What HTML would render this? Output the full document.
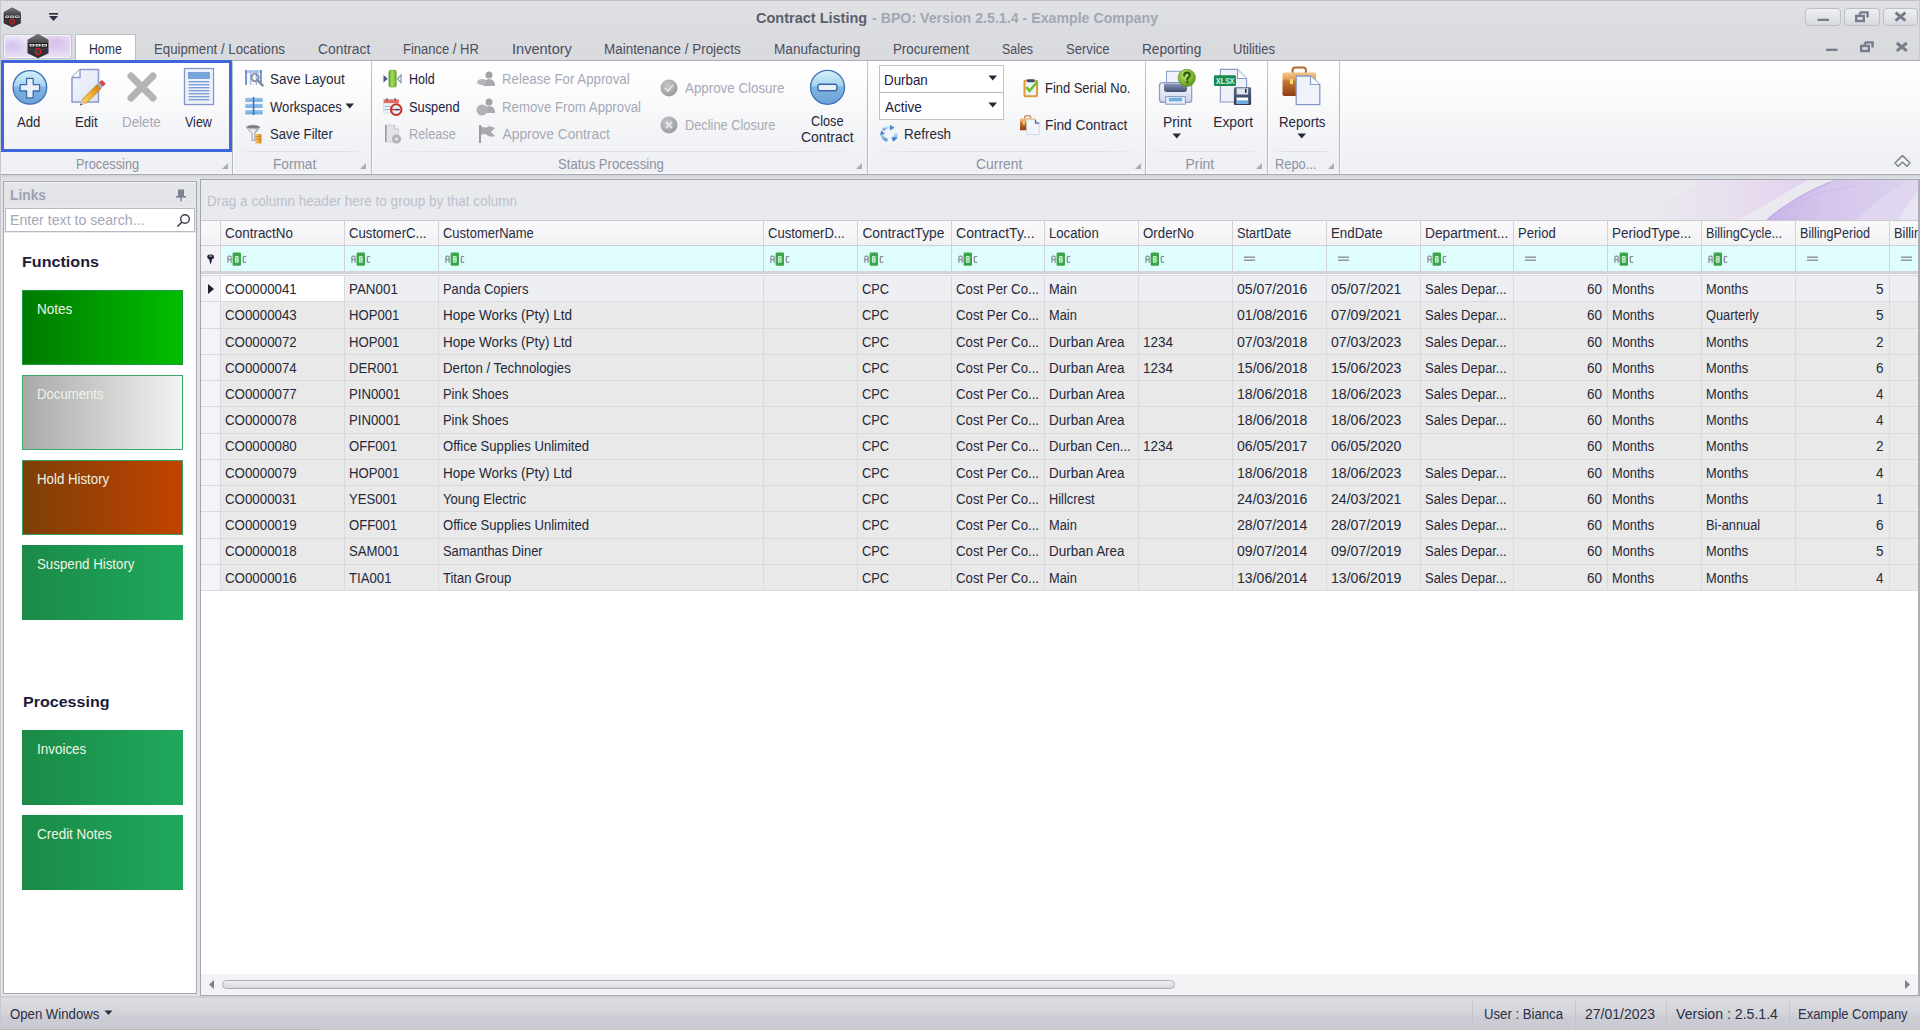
<!DOCTYPE html><html><head><meta charset="utf-8"><style>
html,body{margin:0;padding:0;}
body{width:1920px;height:1030px;overflow:hidden;position:relative;background:#e3e4e8;font-family:"Liberation Sans",sans-serif;}
body>div,body>svg{position:absolute;}
.t{position:absolute;white-space:nowrap;transform-origin:0 0;}
</style></head><body>
<div style="left:0px;top:0px;width:1920px;height:61px;background:linear-gradient(#e1e2e6 0,#dbdce0 45%,#d9dade 100%);"></div>
<div style="left:0px;top:0px;width:1920px;height:1px;background:#bfc1c7;"></div>
<svg style="position:absolute;left:2px;top:7px;" width="20" height="21" viewBox="0 0 20 21"><g transform="translate(0.8,0.2) scale(0.82)"><defs><linearGradient id="lg0_8" x1="0" y1="0" x2="0" y2="1"><stop offset="0" stop-color="#77777c"/><stop offset="0.5" stop-color="#3c3c40"/><stop offset="1" stop-color="#2a2a2e"/></linearGradient></defs><polygon points="11.5,0 22,6 22,19.5 11.5,24.5 1,19.5 1,6" fill="url(#lg0_8)"/><rect x="2" y="9.3" width="19.5" height="4.3" fill="#111"/><path d="M3,10.2 h5 v2.6 h-5 z M9,10.2 h5 v2.6 h-5 z M15,10.2 h5.5 v2.6 h-5.5 z" fill="#f2f2f2"/><path d="M4.2,11 h2.6 v1 h-2.6 z M10.2,11 h2.6 v1 h-2.6 z M16.2,11 h3.4 v1 h-3.4 z" fill="#333"/><polygon points="11.5,14.5 14,16 14,19.5 11.5,21 9,19.5 9,16" fill="none" stroke="#d42020" stroke-width="1.3"/><circle cx="11.5" cy="17.8" r="1" fill="#2a5a5a"/></g></svg>
<svg style="position:absolute;left:48px;top:12px;" width="12" height="10" viewBox="0 0 12 10"><rect x="1" y="1" width="9" height="1.6" fill="#2a2a40"/><polygon points="1,4 10,4 5.5,9" fill="#2a2a40"/></svg>
<div class="t" style="left:756.00px;top:9.78px;font-size:14.50px;line-height:16.20px;color:#5b5e6c;font-weight:bold;">Contract Listing</div>
<div class="t" style="left:872.00px;top:9.78px;font-size:14.50px;line-height:16.20px;color:#a3a7b3;font-weight:bold;transform:scaleX(0.9779);"> - BPO: Version 2.5.1.4 - Example Company</div>
<div style="left:1805.3px;top:7.5px;width:35.3px;height:18.2px;box-sizing:border-box;border:1.3px solid #bcbfc8;border-radius:4px;background:linear-gradient(#eff0f3,#e2e3e7 60%,#d9dadf);"></div>
<div style="left:1844px;top:7.5px;width:35.7px;height:18.2px;box-sizing:border-box;border:1.3px solid #bcbfc8;border-radius:4px;background:linear-gradient(#eff0f3,#e2e3e7 60%,#d9dadf);"></div>
<div style="left:1883px;top:7.5px;width:34.8px;height:18.2px;box-sizing:border-box;border:1.3px solid #bcbfc8;border-radius:4px;background:linear-gradient(#eff0f3,#e2e3e7 60%,#d9dadf);"></div>
<svg style="position:absolute;left:1800px;top:0px;" width="120" height="60" viewBox="0 0 120 60"><rect x="17.5" y="18.7" width="11.5" height="2.3" fill="#777b8b"/><path d="M59.9,12.4 H67.6 V17.6 M59.9,12.4 V14.7" stroke="#777b8b" stroke-width="2.4" fill="none"/><rect x="56.2" y="15.9" width="7.6" height="5.1" fill="none" stroke="#777b8b" stroke-width="2.4"/><path d="M95.6,12.6 L105.4,20.7 M105.4,12.6 L95.6,20.7" stroke="#777b8b" stroke-width="2.9"/><rect x="26" y="48.7" width="11.5" height="2.3" fill="#777b8b"/><path d="M64.9,42.4 H72.6 V47.6 M64.9,42.4 V44.7" stroke="#777b8b" stroke-width="2.4" fill="none"/><rect x="61.2" y="45.9" width="7.6" height="5.1" fill="none" stroke="#777b8b" stroke-width="2.4"/><path d="M96.8,43 L106.8,50.8 M106.8,43 L96.8,50.8" stroke="#777b8b" stroke-width="2.9"/></svg>
<div style="left:1918.5px;top:0px;width:1.5px;height:61px;background:#c9cbd1;"></div>
<div style="left:0px;top:60px;width:1920px;height:1px;background:#abaeb7;"></div>
<div style="left:3px;top:34px;width:69px;height:25px;box-sizing:border-box;border:1px solid #c3c5cd;border-radius:3px;box-shadow:inset 0 0 0 1px #f6f2fa;background:radial-gradient(ellipse 40% 80% at 78% 30%,rgba(214,176,232,0.75),rgba(214,176,232,0) 70%),radial-gradient(ellipse 30% 60% at 12% 45%,rgba(200,180,236,0.6),rgba(200,180,236,0) 70%),linear-gradient(#efe9f7,#e0d6f2 60%,#e8e0f6);"></div>
<svg style="position:absolute;left:26px;top:33px;" width="24" height="27" viewBox="0 0 24 27"><g transform="translate(0.5,0.8) scale(1.0)"><defs><linearGradient id="lg0_5" x1="0" y1="0" x2="0" y2="1"><stop offset="0" stop-color="#77777c"/><stop offset="0.5" stop-color="#3c3c40"/><stop offset="1" stop-color="#2a2a2e"/></linearGradient></defs><polygon points="11.5,0 22,6 22,19.5 11.5,24.5 1,19.5 1,6" fill="url(#lg0_5)"/><rect x="2" y="9.3" width="19.5" height="4.3" fill="#111"/><path d="M3,10.2 h5 v2.6 h-5 z M9,10.2 h5 v2.6 h-5 z M15,10.2 h5.5 v2.6 h-5.5 z" fill="#f2f2f2"/><path d="M4.2,11 h2.6 v1 h-2.6 z M10.2,11 h2.6 v1 h-2.6 z M16.2,11 h3.4 v1 h-3.4 z" fill="#333"/><polygon points="11.5,14.5 14,16 14,19.5 11.5,21 9,19.5 9,16" fill="none" stroke="#d42020" stroke-width="1.3"/><circle cx="11.5" cy="17.8" r="1" fill="#2a5a5a"/></g></svg>
<div style="left:75px;top:34px;width:61px;height:27px;box-sizing:border-box;border:1px solid #b9bcc5;border-bottom:none;border-radius:2px 2px 0 0;background:#ffffff;"></div>
<div class="t" style="left:88.50px;top:42.21px;font-size:13.80px;line-height:15.41px;color:#2b2d48;transform:scaleX(0.8899);">Home</div>
<div class="t" style="left:154.40px;top:42.21px;font-size:13.80px;line-height:15.41px;color:#4a4e5e;transform:scaleX(0.9588);">Equipment / Locations</div>
<div class="t" style="left:318.30px;top:42.21px;font-size:13.80px;line-height:15.41px;color:#4a4e5e;transform:scaleX(1.0030);">Contract</div>
<div class="t" style="left:403.20px;top:42.21px;font-size:13.80px;line-height:15.41px;color:#4a4e5e;transform:scaleX(0.9415);">Finance / HR</div>
<div class="t" style="left:512.00px;top:42.21px;font-size:13.80px;line-height:15.41px;color:#4a4e5e;transform:scaleX(1.0555);">Inventory</div>
<div class="t" style="left:604.30px;top:42.21px;font-size:13.80px;line-height:15.41px;color:#4a4e5e;transform:scaleX(0.9744);">Maintenance / Projects</div>
<div class="t" style="left:774.00px;top:42.21px;font-size:13.80px;line-height:15.41px;color:#4a4e5e;transform:scaleX(0.9865);">Manufacturing</div>
<div class="t" style="left:893.00px;top:42.21px;font-size:13.80px;line-height:15.41px;color:#4a4e5e;transform:scaleX(0.9635);">Procurement</div>
<div class="t" style="left:1002.00px;top:42.21px;font-size:13.80px;line-height:15.41px;color:#4a4e5e;transform:scaleX(0.8982);">Sales</div>
<div class="t" style="left:1066.00px;top:42.21px;font-size:13.80px;line-height:15.41px;color:#4a4e5e;transform:scaleX(0.9477);">Service</div>
<div class="t" style="left:1142.00px;top:42.21px;font-size:13.80px;line-height:15.41px;color:#4a4e5e;transform:scaleX(0.9904);">Reporting</div>
<div class="t" style="left:1233.00px;top:42.21px;font-size:13.80px;line-height:15.41px;color:#4a4e5e;transform:scaleX(0.9446);">Utilities</div>
<div style="left:0px;top:61px;width:1920px;height:113px;background:linear-gradient(#ffffff 0%,#fbfbfc 30%,#f1f2f5 75%,#eeeff2 100%);"></div>
<div style="left:0px;top:172px;width:1920px;height:1.5px;background:#f5f5f8;"></div>
<div style="left:0px;top:174px;width:1920px;height:1.3px;background:#a9acb6;"></div>
<div style="left:0px;top:175.3px;width:1920px;height:5px;background:linear-gradient(#cfd0d5,#dcdde1 40%,#dedfe3);"></div>
<div style="left:232px;top:61px;width:1.2px;height:113px;background:linear-gradient(#c8cad2,#b4b7bf 30%,#b4b7bf 100%);"></div>
<div style="left:233.2px;top:61px;width:1px;height:113px;background:#fbfbfd;"></div>
<div style="left:370.5px;top:61px;width:1.2px;height:113px;background:linear-gradient(#c8cad2,#b4b7bf 30%,#b4b7bf 100%);"></div>
<div style="left:371.7px;top:61px;width:1px;height:113px;background:#fbfbfd;"></div>
<div style="left:866.8px;top:61px;width:1.2px;height:113px;background:linear-gradient(#c8cad2,#b4b7bf 30%,#b4b7bf 100%);"></div>
<div style="left:868.0px;top:61px;width:1px;height:113px;background:#fbfbfd;"></div>
<div style="left:1145px;top:61px;width:1.2px;height:113px;background:linear-gradient(#c8cad2,#b4b7bf 30%,#b4b7bf 100%);"></div>
<div style="left:1146.2px;top:61px;width:1px;height:113px;background:#fbfbfd;"></div>
<div style="left:1267px;top:61px;width:1.2px;height:113px;background:linear-gradient(#c8cad2,#b4b7bf 30%,#b4b7bf 100%);"></div>
<div style="left:1268.2px;top:61px;width:1px;height:113px;background:#fbfbfd;"></div>
<div style="left:1339px;top:61px;width:1.2px;height:113px;background:linear-gradient(#c8cad2,#b4b7bf 30%,#b4b7bf 100%);"></div>
<div style="left:1340.2px;top:61px;width:1px;height:113px;background:#fbfbfd;"></div>
<div style="left:8px;top:151px;width:218px;height:1px;background:linear-gradient(90deg,rgba(220,222,228,0),#dcdee4 15%,#dcdee4 85%,rgba(220,222,228,0));"></div>
<div style="left:240px;top:151px;width:124px;height:1px;background:linear-gradient(90deg,rgba(220,222,228,0),#dcdee4 15%,#dcdee4 85%,rgba(220,222,228,0));"></div>
<div style="left:378px;top:151px;width:482px;height:1px;background:linear-gradient(90deg,rgba(220,222,228,0),#dcdee4 15%,#dcdee4 85%,rgba(220,222,228,0));"></div>
<div style="left:875px;top:151px;width:263px;height:1px;background:linear-gradient(90deg,rgba(220,222,228,0),#dcdee4 15%,#dcdee4 85%,rgba(220,222,228,0));"></div>
<div style="left:1152px;top:151px;width:108px;height:1px;background:linear-gradient(90deg,rgba(220,222,228,0),#dcdee4 15%,#dcdee4 85%,rgba(220,222,228,0));"></div>
<div style="left:1274px;top:151px;width:58px;height:1px;background:linear-gradient(90deg,rgba(220,222,228,0),#dcdee4 15%,#dcdee4 85%,rgba(220,222,228,0));"></div>
<div class="t" style="left:75.80px;top:156.91px;font-size:13.80px;line-height:15.41px;color:#8e92a2;transform:scaleX(0.9245);">Processing</div>
<div class="t" style="left:273.00px;top:156.91px;font-size:13.80px;line-height:15.41px;color:#8e92a2;transform:scaleX(0.9898);">Format</div>
<div class="t" style="left:558.00px;top:156.91px;font-size:13.80px;line-height:15.41px;color:#8e92a2;transform:scaleX(0.9510);">Status Processing</div>
<div class="t" style="left:975.60px;top:156.91px;font-size:13.80px;line-height:15.41px;color:#8e92a2;transform:scaleX(1.0086);">Current</div>
<div class="t" style="left:1185.60px;top:156.91px;font-size:13.80px;line-height:15.41px;color:#8e92a2;">Print</div>
<div class="t" style="left:1274.60px;top:156.91px;font-size:13.80px;line-height:15.41px;color:#8e92a2;transform:scaleX(0.9307);">Repo...</div>
<svg style="position:absolute;left:221.5px;top:163px;" width="7" height="7" viewBox="0 0 7 7"><polygon points="6,0 6,6 0,6" fill="#a9acb6"/></svg>
<svg style="position:absolute;left:359.5px;top:163px;" width="7" height="7" viewBox="0 0 7 7"><polygon points="6,0 6,6 0,6" fill="#a9acb6"/></svg>
<svg style="position:absolute;left:855.5px;top:163px;" width="7" height="7" viewBox="0 0 7 7"><polygon points="6,0 6,6 0,6" fill="#a9acb6"/></svg>
<svg style="position:absolute;left:1134.5px;top:163px;" width="7" height="7" viewBox="0 0 7 7"><polygon points="6,0 6,6 0,6" fill="#a9acb6"/></svg>
<svg style="position:absolute;left:1255.5px;top:163px;" width="7" height="7" viewBox="0 0 7 7"><polygon points="6,0 6,6 0,6" fill="#a9acb6"/></svg>
<svg style="position:absolute;left:1327.5px;top:163px;" width="7" height="7" viewBox="0 0 7 7"><polygon points="6,0 6,6 0,6" fill="#a9acb6"/></svg>
<div style="left:1px;top:60px;width:231px;height:92px;box-sizing:border-box;border:3px solid #3d66dc;"></div>
<svg style="position:absolute;left:8px;top:66px;" width="44" height="44" viewBox="0 0 44 44"><defs><linearGradient id="gb" x1="0" y1="0" x2="0" y2="1"><stop offset="0" stop-color="#d4f2fa"/><stop offset="0.45" stop-color="#a6d4ee"/><stop offset="0.5" stop-color="#7fb5e0"/><stop offset="1" stop-color="#6aa2d6"/></linearGradient></defs><circle cx="21.9" cy="21.4" r="16.8" fill="url(#gb)" stroke="#4170b8" stroke-width="1.3"/><path d="M18.6,12.4 h6.6 v6.2 h6.4 v6.4 h-6.4 v6.8 h-6.6 v-6.8 h-6.4 v-6.4 h6.4 z" fill="#eaf0f8" stroke="#3d68b0" stroke-width="1.3" stroke-linejoin="round"/></svg>
<div class="t" style="left:17.00px;top:114.81px;font-size:13.80px;line-height:15.41px;color:#262838;transform:scaleX(0.9532);">Add</div>
<svg style="position:absolute;left:68px;top:66px;" width="40" height="44" viewBox="0 0 40 44"><defs><linearGradient id="pg" x1="0" y1="0" x2="1" y2="1"><stop offset="0" stop-color="#f4f6fb"/><stop offset="1" stop-color="#dde4f2"/></linearGradient><linearGradient id="pc" x1="0" y1="0" x2="1" y2="0"><stop offset="0" stop-color="#f8d060"/><stop offset="0.5" stop-color="#f0b030"/><stop offset="1" stop-color="#d08010"/></linearGradient></defs><path d="M4,11.5 L12,3.5 L30.5,3.5 L30.5,36 L4,36 Z" fill="url(#pg)" stroke="#8a9ace" stroke-width="1.5" stroke-linejoin="round"/><path d="M4,11.5 L12,11.5 L12,3.5" fill="#ffffff" stroke="#8a9ace" stroke-width="1.4"/><g transform="translate(25.4,26.2) rotate(-45)"><rect x="-13.5" y="-2.8" width="21.5" height="5.6" fill="url(#pc)" stroke="#b07010" stroke-width="0.6"/><rect x="8" y="-2.8" width="2.5" height="5.6" fill="#9ab4d8"/><rect x="10.5" y="-2.8" width="4.2" height="5.6" rx="1" fill="#d84848"/><path d="M-13.5,-2.8 L-18.5,0 L-13.5,2.8 Z" fill="#e8c8a0"/><path d="M-16.6,-1.1 L-18.8,0 L-16.6,1.1 Z" fill="#202840"/></g></svg>
<div class="t" style="left:74.50px;top:114.81px;font-size:13.80px;line-height:15.41px;color:#262838;transform:scaleX(0.9548);">Edit</div>
<svg style="position:absolute;left:126px;top:71px;" width="32" height="32" viewBox="0 0 32 32"><path d="M5,5 L27,27 M27,5 L5,27" stroke="#b4b4b4" stroke-width="7" stroke-linecap="round"/></svg>
<div class="t" style="left:121.80px;top:114.81px;font-size:13.80px;line-height:15.41px;color:#a6a9b6;transform:scaleX(0.9679);">Delete</div>
<svg style="position:absolute;left:183px;top:67px;" width="32" height="39" viewBox="0 0 32 39"><rect x="1.5" y="1.5" width="29" height="36" fill="#eef2fa" stroke="#8796c8" stroke-width="1.3"/><rect x="5.5" y="5.5" width="21" height="6" fill="#77a6dc" stroke="#5a84c0" stroke-width="0.6"/><g fill="#7f9fd4"><rect x="5.5" y="14" width="21" height="1.4"/><rect x="5.5" y="17" width="21" height="1.4"/><rect x="5.5" y="20" width="21" height="1.4"/><rect x="5.5" y="23" width="21" height="1.4"/><rect x="5.5" y="26" width="21" height="1.4"/><rect x="5.5" y="29" width="21" height="1.4"/><rect x="5.5" y="32" width="21" height="1.4"/></g></svg>
<div class="t" style="left:184.60px;top:114.81px;font-size:13.80px;line-height:15.41px;color:#262838;transform:scaleX(0.9071);">View</div>
<svg style="position:absolute;left:244px;top:69px;" width="22" height="20" viewBox="0 0 22 20"><rect x="1.5" y="1.3" width="15.5" height="14.5" fill="#f2f5fb"/><rect x="1.5" y="1.3" width="15.5" height="2.6" fill="#a8c4ea"/><rect x="1.2" y="1" width="1.6" height="15" fill="#5a84c8"/><rect x="6.2" y="1" width="1.2" height="15" fill="#9ab8e4"/><rect x="11.8" y="1" width="1.2" height="15" fill="#9ab8e4"/><rect x="16.2" y="1" width="1.6" height="15" fill="#5a84c8"/><circle cx="11" cy="8.6" r="3.6" fill="none" stroke="#8a8e98" stroke-width="2"/><path d="M13.4,11.2 L18.6,16.4" stroke="#8a8e98" stroke-width="2.6" stroke-linecap="round"/><path d="M10,5.5 L11.6,8.4" stroke="#f2f5fb" stroke-width="1.6"/></svg>
<div class="t" style="left:269.60px;top:72.31px;font-size:13.80px;line-height:15.41px;color:#262838;transform:scaleX(0.9752);">Save Layout</div>
<svg style="position:absolute;left:245px;top:97px;" width="19" height="19" viewBox="0 0 19 19"><defs><linearGradient id="wsg" x1="0" y1="0" x2="0" y2="1"><stop offset="0" stop-color="#9cc8ee"/><stop offset="1" stop-color="#6ea6de"/></linearGradient></defs><g fill="url(#wsg)"><rect x="0.3" y="0.8" width="17.4" height="4"/><rect x="0.3" y="6.8" width="17.4" height="4"/><rect x="0.3" y="13" width="17.4" height="4.4"/></g><rect x="7.8" y="0" width="1.6" height="18" fill="#3e70bc"/></svg>
<div class="t" style="left:269.60px;top:99.61px;font-size:13.80px;line-height:15.41px;color:#262838;transform:scaleX(0.9491);">Workspaces</div>
<svg style="position:absolute;left:345px;top:103px;" width="10" height="6" viewBox="0 0 10 6"><polygon points="0.5,0.5 9,0.5 4.75,5.5" fill="#262838"/></svg>
<svg style="position:absolute;left:245px;top:124px;" width="18" height="21" viewBox="0 0 18 21"><defs><linearGradient id="fng" x1="0" y1="0" x2="1" y2="0"><stop offset="0" stop-color="#c8ccd2"/><stop offset="0.5" stop-color="#f0f2f4"/><stop offset="1" stop-color="#9a9ea6"/></linearGradient><linearGradient id="cng" x1="0" y1="0" x2="1" y2="0"><stop offset="0" stop-color="#f8d070"/><stop offset="1" stop-color="#d88a20"/></linearGradient></defs><path d="M1,3 Q8,-0.5 15,3 L9.8,9.5 L9.8,16.5 L7,16.5 L7,9.5 Z" fill="url(#fng)" stroke="#8c9098" stroke-width="0.8"/><ellipse cx="8" cy="3" rx="6" ry="1.6" fill="#7a7e86"/><rect x="10" y="10" width="6.5" height="9.5" rx="1" fill="url(#cng)"/><path d="M10.5,12.6 h5.5 M10.5,15.2 h5.5" stroke="#c87818" stroke-width="0.7"/></svg>
<div class="t" style="left:269.60px;top:127.01px;font-size:13.80px;line-height:15.41px;color:#262838;transform:scaleX(0.9524);">Save Filter</div>
<svg style="position:absolute;left:382px;top:69px;" width="21" height="20" viewBox="0 0 21 20"><defs><linearGradient id="hg" x1="0" y1="0" x2="1" y2="0"><stop offset="0" stop-color="#5aa020"/><stop offset="0.4" stop-color="#a8dc60"/><stop offset="1" stop-color="#6cb02c"/></linearGradient></defs><polygon points="1.5,6 5.8,9.8 1.5,13.6" fill="#4a5a88"/><rect x="6.9" y="1.3" width="7.4" height="16.7" rx="1.5" fill="url(#hg)" stroke="#5a9a22" stroke-width="0.6"/><polygon points="19,6 15.6,9.8 19,13.6" fill="none" stroke="#8a94b4" stroke-width="1.2"/></svg>
<div class="t" style="left:408.50px;top:72.41px;font-size:13.80px;line-height:15.41px;color:#1e2040;transform:scaleX(0.9057);">Hold</div>
<svg style="position:absolute;left:383px;top:98px;" width="21" height="19" viewBox="0 0 21 19"><rect x="0.8" y="1.5" width="15" height="13.5" fill="#eef2f8" stroke="#c4ccd8" stroke-width="0.6"/><rect x="0.8" y="1.5" width="15" height="3.6" fill="#e86a5a"/><rect x="3.2" y="0" width="1.3" height="3" fill="#5a6a8a"/><rect x="11.5" y="0" width="1.3" height="3" fill="#5a6a8a"/><line x1="1.5" y1="8.5" x2="8" y2="8.5" stroke="#9ab0d4" stroke-width="1"/><line x1="1.5" y1="11.5" x2="8" y2="11.5" stroke="#9ab0d4" stroke-width="1"/><circle cx="13.2" cy="11.6" r="5.3" fill="#e4ecf6" stroke="#c83028" stroke-width="2"/><line x1="8" y1="11.6" x2="17" y2="11.6" stroke="#c83028" stroke-width="1.4"/><line x1="13" y1="11.6" x2="16" y2="11.6" stroke="#2a3a6a" stroke-width="1.2"/></svg>
<div class="t" style="left:408.50px;top:99.61px;font-size:13.80px;line-height:15.41px;color:#1e2040;transform:scaleX(0.9290);">Suspend</div>
<svg style="position:absolute;left:384px;top:124px;" width="19" height="21" viewBox="0 0 19 21"><path d="M1.5,1 L10.5,1 L14.5,5 L14.5,18 L1.5,18 Z" fill="#e2e3e6" stroke="#c8c9cd" stroke-width="0.8"/><rect x="1" y="1" width="1.6" height="17" fill="#9a9ca2"/><path d="M10.5,1 L10.5,5 L14.5,5" fill="#f4f4f6" stroke="#b8b9be" stroke-width="0.8"/><circle cx="12.5" cy="15" r="4.6" fill="#b4b5ba"/><circle cx="12.5" cy="15" r="1.6" fill="#e8e8ea"/></svg>
<div class="t" style="left:408.50px;top:127.21px;font-size:13.80px;line-height:15.41px;color:#a6a9b6;transform:scaleX(0.9245);">Release</div>
<svg style="position:absolute;left:476px;top:70px;" width="21" height="18" viewBox="0 0 21 18"><circle cx="13" cy="5" r="3.5" fill="#a0a2a8"/><path d="M7,16 Q8,9 13,9 Q19,9 19,16 Z" fill="#a8aab0"/><ellipse cx="6" cy="12" rx="5" ry="3" fill="#b4b6bc"/></svg>
<div class="t" style="left:502.20px;top:72.41px;font-size:13.80px;line-height:15.41px;color:#a6a9b6;transform:scaleX(0.9623);">Release For Approval</div>
<svg style="position:absolute;left:476px;top:97px;" width="21" height="19" viewBox="0 0 21 19"><circle cx="13" cy="5" r="3.5" fill="#a0a2a8"/><path d="M7,16 Q8,9 13,9 Q19,9 19,16 Z" fill="#a8aab0"/><circle cx="6" cy="13" r="5.5" fill="#b0b2b8"/></svg>
<div class="t" style="left:502.20px;top:99.51px;font-size:13.80px;line-height:15.41px;color:#a6a9b6;transform:scaleX(0.9596);">Remove From Approval</div>
<svg style="position:absolute;left:478px;top:124px;" width="19" height="20" viewBox="0 0 19 20"><rect x="1" y="1" width="2" height="18" fill="#9a9ca2"/><path d="M3,2 Q8,5 11,2 L17,4 L13,8 L17,12 Q12,14 9,11 Q6,9 3,11 Z" fill="#a8aab0"/></svg>
<div class="t" style="left:502.50px;top:127.21px;font-size:13.80px;line-height:15.41px;color:#a6a9b6;">Approve Contract</div>
<svg style="position:absolute;left:660px;top:79px;" width="18" height="18" viewBox="0 0 18 18"><defs><radialGradient id="gg79" cx="40%" cy="35%" r="65%"><stop offset="0" stop-color="#c8c8cc"/><stop offset="1" stop-color="#9a9ca0"/></radialGradient></defs><circle cx="9" cy="9" r="8.5" fill="url(#gg79)"/><path d="M5,9 L8,12 L13,6" stroke="#e8e8ea" stroke-width="1.6" fill="none"/></svg>
<svg style="position:absolute;left:660px;top:116px;" width="18" height="18" viewBox="0 0 18 18"><defs><radialGradient id="gg116" cx="40%" cy="35%" r="65%"><stop offset="0" stop-color="#c8c8cc"/><stop offset="1" stop-color="#9a9ca0"/></radialGradient></defs><circle cx="9" cy="9" r="8.5" fill="url(#gg116)"/><path d="M6,6 L12,12 M12,6 L6,12" stroke="#e8e8ea" stroke-width="1.8"/></svg>
<div class="t" style="left:684.70px;top:80.51px;font-size:13.80px;line-height:15.41px;color:#a6a9b6;transform:scaleX(0.9673);">Approve Closure</div>
<div class="t" style="left:684.70px;top:118.21px;font-size:13.80px;line-height:15.41px;color:#a6a9b6;transform:scaleX(0.9283);">Decline Closure</div>
<svg style="position:absolute;left:805px;top:65px;" width="45" height="45" viewBox="0 0 45 45"><defs><linearGradient id="gb2" x1="0" y1="0" x2="0" y2="1"><stop offset="0" stop-color="#d4f2fa"/><stop offset="0.45" stop-color="#a6d4ee"/><stop offset="0.5" stop-color="#7fb5e0"/><stop offset="1" stop-color="#6aa2d6"/></linearGradient></defs><circle cx="22.5" cy="22.3" r="17" fill="url(#gb2)" stroke="#4170b8" stroke-width="1.3"/><rect x="12.9" y="19.3" width="19" height="6.4" rx="2" fill="#eaf0f8" stroke="#3b64ac" stroke-width="1.4"/></svg>
<div class="t" style="left:810.50px;top:114.01px;font-size:13.80px;line-height:15.41px;color:#262838;transform:scaleX(0.9214);">Close</div>
<div class="t" style="left:801.00px;top:130.11px;font-size:13.80px;line-height:15.41px;color:#262838;transform:scaleX(1.0069);">Contract</div>
<div style="left:879px;top:65px;width:125px;height:28px;box-sizing:border-box;border:1px solid #bfc2c9;background:#fff;"></div>
<div style="left:879px;top:92px;width:125px;height:28px;box-sizing:border-box;border:1px solid #bfc2c9;border-top:1.5px solid #b4b7bf;background:#fff;"></div>
<div class="t" style="left:884.30px;top:72.51px;font-size:13.80px;line-height:15.41px;color:#1e2040;transform:scaleX(0.9679);">Durban</div>
<div class="t" style="left:884.50px;top:99.51px;font-size:13.80px;line-height:15.41px;color:#1e2040;transform:scaleX(0.9821);">Active</div>
<svg style="position:absolute;left:988px;top:75px;" width="10" height="7" viewBox="0 0 10 7"><polygon points="0.5,0.5 9,0.5 4.75,5.5" fill="#262838"/></svg>
<svg style="position:absolute;left:988px;top:102px;" width="10" height="7" viewBox="0 0 10 7"><polygon points="0.5,0.5 9,0.5 4.75,5.5" fill="#262838"/></svg>
<svg style="position:absolute;left:878px;top:124px;" width="22" height="19" viewBox="0 0 22 19"><defs><linearGradient id="rfg" x1="0" y1="0" x2="0" y2="1"><stop offset="0" stop-color="#d6f2fa"/><stop offset="1" stop-color="#5a9ad8"/></linearGradient></defs><g fill="none" stroke="url(#rfg)" stroke-width="3.4"><path d="M5,6 A7,7 0 0 1 13.5,3.2"/><path d="M17.8,8.5 A7,7 0 0 1 14.5,16"/><path d="M9.5,16.2 A7,7 0 0 1 4.2,9.5"/></g><g fill="#4a86cc"><polygon points="12,0.8 16.5,3.8 12.2,6.4"/><polygon points="19.6,13.6 15.2,17.6 13.6,13"/><polygon points="2,11.5 3.2,6.5 7,9.4"/></g><circle cx="11" cy="9.5" r="3" fill="#f0f6fc"/></svg>
<div class="t" style="left:904.30px;top:126.91px;font-size:13.80px;line-height:15.41px;color:#262838;transform:scaleX(0.9750);">Refresh</div>
<svg style="position:absolute;left:1020px;top:77px;" width="22" height="22" viewBox="0 0 22 22"><rect x="4.5" y="3.8" width="12.6" height="15.4" rx="0.8" fill="#eef2f8" stroke="#e09a38" stroke-width="2"/><rect x="7" y="2.2" width="7.5" height="3" rx="1" fill="#3a4a78"/><path d="M6.5,10 L9.5,14 L17.5,4.5" stroke="#6cc030" stroke-width="2.6" fill="none" stroke-linejoin="round"/></svg>
<div class="t" style="left:1045.30px;top:80.91px;font-size:13.80px;line-height:15.41px;color:#262838;transform:scaleX(0.9359);">Find Serial No.</div>
<svg style="position:absolute;left:1018px;top:113px;" width="24" height="24" viewBox="0 0 24 24"><defs><linearGradient id="fbc" x1="0" y1="0" x2="0" y2="1"><stop offset="0" stop-color="#f4c888"/><stop offset="0.28" stop-color="#e0a060"/><stop offset="0.35" stop-color="#c87838"/><stop offset="1" stop-color="#8e3e12"/></linearGradient></defs><rect x="6.65" y="2.70" width="6.20" height="3.65" rx="1.46" fill="none" stroke="#b86a30" stroke-width="1.02"/><rect x="2.00" y="5.33" width="15.50" height="11.97" rx="0.88" fill="url(#fbc)"/><rect x="5" y="8.5" width="1.8" height="3" fill="#f8e060"/><path d="M8.6,6.7 L17.5,6.7 L21.2,10.2 L21.2,21.6 L8.6,21.6 Z" fill="#f2f4f9" stroke="#c8d0e0" stroke-width="0.8"/><path d="M17.5,6.7 L17.5,10.2 L21.2,10.2" fill="none" stroke="#4a68b8" stroke-width="1.2"/></svg>
<div class="t" style="left:1045.30px;top:118.01px;font-size:13.80px;line-height:15.41px;color:#262838;transform:scaleX(0.9950);">Find Contract</div>
<svg style="position:absolute;left:1155px;top:64px;" width="45" height="46" viewBox="0 0 45 46"><defs><linearGradient id="prb" x1="0" y1="0" x2="0" y2="1"><stop offset="0" stop-color="#f4f6fb"/><stop offset="1" stop-color="#cdd6e8"/></linearGradient><linearGradient id="prt" x1="0" y1="0" x2="0" y2="1"><stop offset="0" stop-color="#8a9ab8"/><stop offset="1" stop-color="#3e4c6e"/></linearGradient><radialGradient id="hq" cx="40%" cy="35%" r="65%"><stop offset="0" stop-color="#c4e86a"/><stop offset="1" stop-color="#5c9a18"/></radialGradient></defs><rect x="11.5" y="7.3" width="13.6" height="14" fill="#f0f3f9" stroke="#90a0c8" stroke-width="1.1"/><rect x="4.5" y="18.6" width="32.2" height="19.8" rx="3" fill="url(#prb)" stroke="#8a9ac4" stroke-width="1.2"/><path d="M9,19.5 H32 V25 Q32,28 29,28 H12 Q9,28 9,25 Z" fill="url(#prt)"/><rect x="10.8" y="32.6" width="19.6" height="7.6" fill="#eef2f8" stroke="#8a9ac4" stroke-width="1.1"/><rect x="13.8" y="33.8" width="13.4" height="3.6" fill="#6aaee6"/><circle cx="31.8" cy="13.8" r="8.6" fill="url(#hq)" stroke="#5a9222" stroke-width="0.7"/><path d="M29.2,11.6 Q29.2,8.6 32,8.6 Q34.8,8.6 34.8,11.2 Q34.8,13 32.6,14 L32.4,15.6" stroke="#2e5a10" stroke-width="2.1" fill="none" stroke-linecap="round"/><circle cx="32.3" cy="18.2" r="1.2" fill="#2e5a10"/></svg>
<div class="t" style="left:1162.50px;top:114.71px;font-size:13.80px;line-height:15.41px;color:#262838;transform:scaleX(1.0046);">Print</div>
<svg style="position:absolute;left:1172px;top:133px;" width="10" height="6" viewBox="0 0 10 6"><polygon points="0.5,0.5 9,0.5 4.75,5.5" fill="#262838"/></svg>
<svg style="position:absolute;left:1210px;top:64px;" width="45" height="46" viewBox="0 0 45 46"><defs><linearGradient id="exf" x1="0" y1="0" x2="0" y2="1"><stop offset="0" stop-color="#5a6888"/><stop offset="1" stop-color="#2e3a58"/></linearGradient></defs><path d="M10.4,5.4 L27.5,5.4 L36.6,14.5 L36.6,38 L10.4,38 Z" fill="#eef1f8" stroke="#8c9cc8" stroke-width="1.2"/><path d="M27.5,5.4 L27.5,14.5 L36.6,14.5" fill="#fafbfd" stroke="#8c9cc8" stroke-width="1.1"/><rect x="3.9" y="11.2" width="22.1" height="10.7" rx="1.2" fill="#158a50"/><text x="15" y="19.6" font-size="8.4" font-weight="bold" text-anchor="middle" fill="#c8eed8" font-family="Liberation Mono" letter-spacing="-0.4">XLSX</text><rect x="23.9" y="23.2" width="17.2" height="17.7" rx="1.2" fill="url(#exf)"/><rect x="26.6" y="24.3" width="11.6" height="6.2" fill="#dfe6f0"/><rect x="35" y="25" width="1.6" height="3.8" fill="#1e2840"/><rect x="26.6" y="33.5" width="11.6" height="6.4" fill="#ffffff"/><rect x="26.6" y="36.4" width="11.6" height="3.5" fill="#6aa8e0"/></svg>
<div class="t" style="left:1213.20px;top:114.71px;font-size:13.80px;line-height:15.41px;color:#262838;">Export</div>
<svg style="position:absolute;left:1275px;top:62px;" width="50" height="46" viewBox="0 0 50 46"><defs><linearGradient id="rbc" x1="0" y1="0" x2="0" y2="1"><stop offset="0" stop-color="#f4c888"/><stop offset="0.28" stop-color="#e0a060"/><stop offset="0.35" stop-color="#c87838"/><stop offset="1" stop-color="#8e3e12"/></linearGradient></defs><rect x="17.55" y="5.40" width="13.40" height="7.15" rx="2.86" fill="none" stroke="#b86a30" stroke-width="2.00"/><rect x="7.50" y="10.55" width="33.50" height="23.45" rx="1.72" fill="url(#rbc)"/><rect x="15" y="17" width="3" height="5.2" rx="1" fill="#f8e060"/><path d="M21.2,14 L35.5,14 L44.8,22.5 L44.8,42.7 L21.2,42.7 Z" fill="#eff2f9" stroke="#8a9ac6" stroke-width="1.3" stroke-linejoin="round"/><path d="M35.5,14 L35.5,22.5 L44.8,22.5" fill="#fafbfd" stroke="#8a9ac6" stroke-width="1.2"/></svg>
<div class="t" style="left:1278.50px;top:114.71px;font-size:13.80px;line-height:15.41px;color:#262838;transform:scaleX(0.9625);">Reports</div>
<svg style="position:absolute;left:1297px;top:133px;" width="10" height="6" viewBox="0 0 10 6"><polygon points="0.5,0.5 9,0.5 4.75,5.5" fill="#262838"/></svg>
<svg style="position:absolute;left:1893px;top:153px;" width="20" height="16" viewBox="0 0 20 16"><polygon points="9.5,2.6 17,10 13.8,13.2 9.5,9 5.2,13.2 2,10" fill="#f4f5f8" stroke="#80838f" stroke-width="1.5" stroke-linejoin="round"/></svg>
<div style="left:3px;top:181px;width:194px;height:813px;box-sizing:border-box;border:1px solid #a6a9b1;background:#ffffff;"></div>
<div style="left:4px;top:182px;width:192px;height:26px;background:#e4e5e9;border-top:1px solid #f4f5f7;box-sizing:border-box;"></div>
<div style="left:4px;top:207px;width:192px;height:1.5px;background:#b3b6be;"></div>
<div style="left:4px;top:207px;width:192px;height:26px;background:#eaebee;"></div>
<div class="t" style="left:10.00px;top:188.03px;font-size:14.00px;line-height:15.64px;color:#9ca2b4;font-weight:bold;transform:scaleX(0.9845);">Links</div>
<svg style="position:absolute;left:175px;top:189px;" width="12" height="13" viewBox="0 0 12 13"><rect x="3" y="0.5" width="6" height="7" fill="#7e8190"/><rect x="1" y="7" width="10" height="1.6" fill="#7e8190"/><rect x="5.3" y="8" width="1.4" height="4.5" fill="#7e8190"/></svg>
<div style="left:5px;top:208px;width:190px;height:24px;box-sizing:border-box;border:1px solid #b7bac2;background:#ffffff;"></div>
<div class="t" style="left:9.50px;top:213.41px;font-size:13.80px;line-height:15.41px;color:#a4a8b6;transform:scaleX(1.0257);">Enter text to search...</div>
<svg style="position:absolute;left:176px;top:213px;" width="15" height="15" viewBox="0 0 15 15"><circle cx="9" cy="6" r="4.3" fill="none" stroke="#3c3e48" stroke-width="1.4"/><line x1="6" y1="9" x2="1.5" y2="13.5" stroke="#3c3e48" stroke-width="1.6"/></svg>
<div class="t" style="left:22.00px;top:252.97px;font-size:15.50px;line-height:17.31px;color:#1b1c3a;font-weight:bold;transform:scaleX(1.0399);">Functions</div>
<div class="t" style="left:22.80px;top:692.97px;font-size:15.50px;line-height:17.31px;color:#1b1c3a;font-weight:bold;transform:scaleX(1.0352);">Processing</div>
<div style="left:22px;top:290px;width:161px;height:75px;box-sizing:border-box;border:1px solid #1f9a3a;background:linear-gradient(90deg,#007a00,#00be00);"></div>
<div class="t" style="left:36.60px;top:302.11px;font-size:13.80px;line-height:15.41px;color:#eef4e6;transform:scaleX(0.9822);">Notes</div>
<div style="left:22px;top:375px;width:161px;height:75px;box-sizing:border-box;border:1px solid #3aa86a;background:linear-gradient(90deg,#a9a9a9,#f3f3f3);"></div>
<div class="t" style="left:36.60px;top:387.11px;font-size:13.80px;line-height:15.41px;color:#eef4e6;transform:scaleX(0.9544);">Documents</div>
<div style="left:22px;top:460px;width:161px;height:75px;box-sizing:border-box;border:1px solid #3aa060;background:linear-gradient(90deg,#7c3f07,#c24300);"></div>
<div class="t" style="left:36.60px;top:472.11px;font-size:13.80px;line-height:15.41px;color:#eef4e6;transform:scaleX(0.9609);">Hold History</div>
<div style="left:22px;top:545px;width:161px;height:75px;box-sizing:border-box;border:none;background:linear-gradient(90deg,#1a8a47,#1fa95d);"></div>
<div class="t" style="left:36.60px;top:557.11px;font-size:13.80px;line-height:15.41px;color:#eef4e6;transform:scaleX(0.9632);">Suspend History</div>
<div style="left:22px;top:730px;width:161px;height:75px;box-sizing:border-box;border:none;background:linear-gradient(90deg,#1a8a47,#1fa95d);"></div>
<div class="t" style="left:36.60px;top:742.11px;font-size:13.80px;line-height:15.41px;color:#eef4e6;transform:scaleX(0.9741);">Invoices</div>
<div style="left:22px;top:815px;width:161px;height:75px;box-sizing:border-box;border:none;background:linear-gradient(90deg,#1a8a47,#1fa95d);"></div>
<div class="t" style="left:36.60px;top:827.11px;font-size:13.80px;line-height:15.41px;color:#eef4e6;transform:scaleX(0.9742);">Credit Notes</div>
<div style="left:200px;top:179px;width:1720px;height:817px;box-sizing:border-box;border:1px solid #a3a6ae;border-right:none;background:#ffffff;"></div>
<div style="left:201px;top:180px;width:1719px;height:40px;background:#e9eaee;"></div>
<svg style="position:absolute;left:1640px;top:180px;" width="278" height="40" viewBox="0 0 278 40"><defs><linearGradient id="sw1" x1="0" y1="0" x2="1" y2="0"><stop offset="0" stop-color="#e9eaee"/><stop offset="0.5" stop-color="#e8e0ee"/><stop offset="1" stop-color="#e2d2ee"/></linearGradient><linearGradient id="sw2" x1="0" y1="0" x2="1" y2="0"><stop offset="0" stop-color="#c8b4e8"/><stop offset="0.4" stop-color="#d4c6ec"/><stop offset="1" stop-color="#ddd2ef"/></linearGradient></defs><polygon points="0,40 60,0 168,0 99,40" fill="url(#sw1)"/><polygon points="99,40 168,0 190,0 127,40" fill="#ebe9f0"/><path d="M127,40 Q152,18 190,2 L194,0 L278,0 L278,40 Z" fill="url(#sw2)"/><path d="M216,40 Q238,18 270,0 L278,0 L278,40 Z" fill="#e0d6f0"/><path d="M258,40 Q266,26 278,10 L278,40 Z" fill="#e8e4f2"/><path d="M127,40 Q152,18 190,2" stroke="#c0a8e6" stroke-width="1.2" fill="none"/><path d="M140,33 Q170,12 215,6" stroke="#c6b0ea" stroke-width="2" fill="none" opacity="0.3"/></svg>
<div class="t" style="left:207.00px;top:194.21px;font-size:13.80px;line-height:15.41px;color:#bcc0cc;transform:scaleX(0.9811);">Drag a column header here to group by that column</div>
<div style="left:201px;top:220px;width:1719px;height:26px;background:linear-gradient(#fafafb,#f1f1f3);border-top:1px solid #c9cbd1;box-sizing:border-box;"></div>
<div style="left:201px;top:245px;width:1719px;height:1px;background:#cdcfd5;"></div>
<div style="left:201px;top:246px;width:1719px;height:25px;background:#dffdfd;"></div>
<div style="left:201px;top:246px;width:19px;height:25px;background:#f2f3f6;"></div>
<div style="left:201px;top:271px;width:1719px;height:5px;background:linear-gradient(#d3d4d9 0,#d3d4d9 2.5px,#f6f6f8 2.5px,#f6f6f8 4px,#d9dadf 4px);"></div>
<div class="t" style="left:225.40px;top:225.91px;font-size:13.80px;line-height:15.41px;color:#2a2c42;transform:scaleX(0.9745);">ContractNo</div>
<div class="t" style="left:349.40px;top:225.91px;font-size:13.80px;line-height:15.41px;color:#2a2c42;transform:scaleX(0.9537);">CustomerC...</div>
<div class="t" style="left:443.40px;top:225.91px;font-size:13.80px;line-height:15.41px;color:#2a2c42;transform:scaleX(0.9399);">CustomerName</div>
<div class="t" style="left:768.40px;top:225.91px;font-size:13.80px;line-height:15.41px;color:#2a2c42;transform:scaleX(0.9438);">CustomerD...</div>
<div class="t" style="left:862.40px;top:225.91px;font-size:13.80px;line-height:15.41px;color:#2a2c42;">ContractType</div>
<div class="t" style="left:955.90px;top:225.91px;font-size:13.80px;line-height:15.41px;color:#2a2c42;transform:scaleX(1.0184);">ContractTy...</div>
<div class="t" style="left:1049.40px;top:225.91px;font-size:13.80px;line-height:15.41px;color:#2a2c42;transform:scaleX(0.9528);">Location</div>
<div class="t" style="left:1143.40px;top:225.91px;font-size:13.80px;line-height:15.41px;color:#2a2c42;transform:scaleX(0.9621);">OrderNo</div>
<div class="t" style="left:1237.40px;top:225.91px;font-size:13.80px;line-height:15.41px;color:#2a2c42;transform:scaleX(0.9300);">StartDate</div>
<div class="t" style="left:1331.40px;top:225.91px;font-size:13.80px;line-height:15.41px;color:#2a2c42;transform:scaleX(0.9629);">EndDate</div>
<div class="t" style="left:1424.90px;top:225.91px;font-size:13.80px;line-height:15.41px;color:#2a2c42;transform:scaleX(0.9966);">Department...</div>
<div class="t" style="left:1518.40px;top:225.91px;font-size:13.80px;line-height:15.41px;color:#2a2c42;transform:scaleX(0.9453);">Period</div>
<div class="t" style="left:1612.40px;top:225.91px;font-size:13.80px;line-height:15.41px;color:#2a2c42;transform:scaleX(0.9755);">PeriodType...</div>
<div class="t" style="left:1706.40px;top:225.91px;font-size:13.80px;line-height:15.41px;color:#2a2c42;transform:scaleX(0.9178);">BillingCycle...</div>
<div class="t" style="left:1799.90px;top:225.91px;font-size:13.80px;line-height:15.41px;color:#2a2c42;transform:scaleX(0.9128);">BillingPeriod</div>
<div class="t" style="left:1893.90px;top:225.91px;font-size:13.80px;line-height:15.41px;color:#2a2c42;transform:scaleX(0.9300);">Billin</div>
<div style="left:220px;top:220px;width:1px;height:51px;background:#d0d2d8;"></div>
<div style="left:344px;top:220px;width:1px;height:51px;background:#d0d2d8;"></div>
<div style="left:438px;top:220px;width:1px;height:51px;background:#d0d2d8;"></div>
<div style="left:763px;top:220px;width:1px;height:51px;background:#d0d2d8;"></div>
<div style="left:857px;top:220px;width:1px;height:51px;background:#d0d2d8;"></div>
<div style="left:950.5px;top:220px;width:1px;height:51px;background:#d0d2d8;"></div>
<div style="left:1044px;top:220px;width:1px;height:51px;background:#d0d2d8;"></div>
<div style="left:1138px;top:220px;width:1px;height:51px;background:#d0d2d8;"></div>
<div style="left:1232px;top:220px;width:1px;height:51px;background:#d0d2d8;"></div>
<div style="left:1326px;top:220px;width:1px;height:51px;background:#d0d2d8;"></div>
<div style="left:1419.5px;top:220px;width:1px;height:51px;background:#d0d2d8;"></div>
<div style="left:1513px;top:220px;width:1px;height:51px;background:#d0d2d8;"></div>
<div style="left:1607px;top:220px;width:1px;height:51px;background:#d0d2d8;"></div>
<div style="left:1701px;top:220px;width:1px;height:51px;background:#d0d2d8;"></div>
<div style="left:1794.5px;top:220px;width:1px;height:51px;background:#d0d2d8;"></div>
<div style="left:1888.5px;top:220px;width:1px;height:51px;background:#d0d2d8;"></div>
<svg style="position:absolute;left:227px;top:252px;" width="21" height="15" viewBox="0 0 21 15"><path d="M0.9,10.8 V5.3 Q0.9,4.2 2,4.2 H3 Q4.1,4.2 4.1,5.3 V10.8 M0.9,7.7 H4.1" stroke="#8a8e9c" stroke-width="1.3" fill="none"/><rect x="5.6" y="0.6" width="8.4" height="13.1" rx="1.3" fill="#3aa648"/><rect x="7.9" y="4" width="3.8" height="6.7" rx="0.8" fill="#c4ecca"/><rect x="9.2" y="5.2" width="1.2" height="1.4" fill="#5cb86a"/><rect x="9.2" y="8" width="1.2" height="1.4" fill="#5cb86a"/><path d="M19.2,4.6 H17 Q16.3,4.6 16.3,5.4 V9.6 Q16.3,10.4 17,10.4 H19.2" stroke="#8a8e9c" stroke-width="1.3" fill="none"/></svg>
<svg style="position:absolute;left:351px;top:252px;" width="21" height="15" viewBox="0 0 21 15"><path d="M0.9,10.8 V5.3 Q0.9,4.2 2,4.2 H3 Q4.1,4.2 4.1,5.3 V10.8 M0.9,7.7 H4.1" stroke="#8a8e9c" stroke-width="1.3" fill="none"/><rect x="5.6" y="0.6" width="8.4" height="13.1" rx="1.3" fill="#3aa648"/><rect x="7.9" y="4" width="3.8" height="6.7" rx="0.8" fill="#c4ecca"/><rect x="9.2" y="5.2" width="1.2" height="1.4" fill="#5cb86a"/><rect x="9.2" y="8" width="1.2" height="1.4" fill="#5cb86a"/><path d="M19.2,4.6 H17 Q16.3,4.6 16.3,5.4 V9.6 Q16.3,10.4 17,10.4 H19.2" stroke="#8a8e9c" stroke-width="1.3" fill="none"/></svg>
<svg style="position:absolute;left:445px;top:252px;" width="21" height="15" viewBox="0 0 21 15"><path d="M0.9,10.8 V5.3 Q0.9,4.2 2,4.2 H3 Q4.1,4.2 4.1,5.3 V10.8 M0.9,7.7 H4.1" stroke="#8a8e9c" stroke-width="1.3" fill="none"/><rect x="5.6" y="0.6" width="8.4" height="13.1" rx="1.3" fill="#3aa648"/><rect x="7.9" y="4" width="3.8" height="6.7" rx="0.8" fill="#c4ecca"/><rect x="9.2" y="5.2" width="1.2" height="1.4" fill="#5cb86a"/><rect x="9.2" y="8" width="1.2" height="1.4" fill="#5cb86a"/><path d="M19.2,4.6 H17 Q16.3,4.6 16.3,5.4 V9.6 Q16.3,10.4 17,10.4 H19.2" stroke="#8a8e9c" stroke-width="1.3" fill="none"/></svg>
<svg style="position:absolute;left:770px;top:252px;" width="21" height="15" viewBox="0 0 21 15"><path d="M0.9,10.8 V5.3 Q0.9,4.2 2,4.2 H3 Q4.1,4.2 4.1,5.3 V10.8 M0.9,7.7 H4.1" stroke="#8a8e9c" stroke-width="1.3" fill="none"/><rect x="5.6" y="0.6" width="8.4" height="13.1" rx="1.3" fill="#3aa648"/><rect x="7.9" y="4" width="3.8" height="6.7" rx="0.8" fill="#c4ecca"/><rect x="9.2" y="5.2" width="1.2" height="1.4" fill="#5cb86a"/><rect x="9.2" y="8" width="1.2" height="1.4" fill="#5cb86a"/><path d="M19.2,4.6 H17 Q16.3,4.6 16.3,5.4 V9.6 Q16.3,10.4 17,10.4 H19.2" stroke="#8a8e9c" stroke-width="1.3" fill="none"/></svg>
<svg style="position:absolute;left:864px;top:252px;" width="21" height="15" viewBox="0 0 21 15"><path d="M0.9,10.8 V5.3 Q0.9,4.2 2,4.2 H3 Q4.1,4.2 4.1,5.3 V10.8 M0.9,7.7 H4.1" stroke="#8a8e9c" stroke-width="1.3" fill="none"/><rect x="5.6" y="0.6" width="8.4" height="13.1" rx="1.3" fill="#3aa648"/><rect x="7.9" y="4" width="3.8" height="6.7" rx="0.8" fill="#c4ecca"/><rect x="9.2" y="5.2" width="1.2" height="1.4" fill="#5cb86a"/><rect x="9.2" y="8" width="1.2" height="1.4" fill="#5cb86a"/><path d="M19.2,4.6 H17 Q16.3,4.6 16.3,5.4 V9.6 Q16.3,10.4 17,10.4 H19.2" stroke="#8a8e9c" stroke-width="1.3" fill="none"/></svg>
<svg style="position:absolute;left:957.5px;top:252px;" width="21" height="15" viewBox="0 0 21 15"><path d="M0.9,10.8 V5.3 Q0.9,4.2 2,4.2 H3 Q4.1,4.2 4.1,5.3 V10.8 M0.9,7.7 H4.1" stroke="#8a8e9c" stroke-width="1.3" fill="none"/><rect x="5.6" y="0.6" width="8.4" height="13.1" rx="1.3" fill="#3aa648"/><rect x="7.9" y="4" width="3.8" height="6.7" rx="0.8" fill="#c4ecca"/><rect x="9.2" y="5.2" width="1.2" height="1.4" fill="#5cb86a"/><rect x="9.2" y="8" width="1.2" height="1.4" fill="#5cb86a"/><path d="M19.2,4.6 H17 Q16.3,4.6 16.3,5.4 V9.6 Q16.3,10.4 17,10.4 H19.2" stroke="#8a8e9c" stroke-width="1.3" fill="none"/></svg>
<svg style="position:absolute;left:1051px;top:252px;" width="21" height="15" viewBox="0 0 21 15"><path d="M0.9,10.8 V5.3 Q0.9,4.2 2,4.2 H3 Q4.1,4.2 4.1,5.3 V10.8 M0.9,7.7 H4.1" stroke="#8a8e9c" stroke-width="1.3" fill="none"/><rect x="5.6" y="0.6" width="8.4" height="13.1" rx="1.3" fill="#3aa648"/><rect x="7.9" y="4" width="3.8" height="6.7" rx="0.8" fill="#c4ecca"/><rect x="9.2" y="5.2" width="1.2" height="1.4" fill="#5cb86a"/><rect x="9.2" y="8" width="1.2" height="1.4" fill="#5cb86a"/><path d="M19.2,4.6 H17 Q16.3,4.6 16.3,5.4 V9.6 Q16.3,10.4 17,10.4 H19.2" stroke="#8a8e9c" stroke-width="1.3" fill="none"/></svg>
<svg style="position:absolute;left:1145px;top:252px;" width="21" height="15" viewBox="0 0 21 15"><path d="M0.9,10.8 V5.3 Q0.9,4.2 2,4.2 H3 Q4.1,4.2 4.1,5.3 V10.8 M0.9,7.7 H4.1" stroke="#8a8e9c" stroke-width="1.3" fill="none"/><rect x="5.6" y="0.6" width="8.4" height="13.1" rx="1.3" fill="#3aa648"/><rect x="7.9" y="4" width="3.8" height="6.7" rx="0.8" fill="#c4ecca"/><rect x="9.2" y="5.2" width="1.2" height="1.4" fill="#5cb86a"/><rect x="9.2" y="8" width="1.2" height="1.4" fill="#5cb86a"/><path d="M19.2,4.6 H17 Q16.3,4.6 16.3,5.4 V9.6 Q16.3,10.4 17,10.4 H19.2" stroke="#8a8e9c" stroke-width="1.3" fill="none"/></svg>
<svg style="position:absolute;left:1244px;top:255px;" width="12" height="8" viewBox="0 0 12 8"><rect x="0" y="1.5" width="11" height="1.4" fill="#8a8d98"/><rect x="0" y="4.5" width="11" height="1.4" fill="#8a8d98"/></svg>
<svg style="position:absolute;left:1338px;top:255px;" width="12" height="8" viewBox="0 0 12 8"><rect x="0" y="1.5" width="11" height="1.4" fill="#8a8d98"/><rect x="0" y="4.5" width="11" height="1.4" fill="#8a8d98"/></svg>
<svg style="position:absolute;left:1426.5px;top:252px;" width="21" height="15" viewBox="0 0 21 15"><path d="M0.9,10.8 V5.3 Q0.9,4.2 2,4.2 H3 Q4.1,4.2 4.1,5.3 V10.8 M0.9,7.7 H4.1" stroke="#8a8e9c" stroke-width="1.3" fill="none"/><rect x="5.6" y="0.6" width="8.4" height="13.1" rx="1.3" fill="#3aa648"/><rect x="7.9" y="4" width="3.8" height="6.7" rx="0.8" fill="#c4ecca"/><rect x="9.2" y="5.2" width="1.2" height="1.4" fill="#5cb86a"/><rect x="9.2" y="8" width="1.2" height="1.4" fill="#5cb86a"/><path d="M19.2,4.6 H17 Q16.3,4.6 16.3,5.4 V9.6 Q16.3,10.4 17,10.4 H19.2" stroke="#8a8e9c" stroke-width="1.3" fill="none"/></svg>
<svg style="position:absolute;left:1525px;top:255px;" width="12" height="8" viewBox="0 0 12 8"><rect x="0" y="1.5" width="11" height="1.4" fill="#8a8d98"/><rect x="0" y="4.5" width="11" height="1.4" fill="#8a8d98"/></svg>
<svg style="position:absolute;left:1614px;top:252px;" width="21" height="15" viewBox="0 0 21 15"><path d="M0.9,10.8 V5.3 Q0.9,4.2 2,4.2 H3 Q4.1,4.2 4.1,5.3 V10.8 M0.9,7.7 H4.1" stroke="#8a8e9c" stroke-width="1.3" fill="none"/><rect x="5.6" y="0.6" width="8.4" height="13.1" rx="1.3" fill="#3aa648"/><rect x="7.9" y="4" width="3.8" height="6.7" rx="0.8" fill="#c4ecca"/><rect x="9.2" y="5.2" width="1.2" height="1.4" fill="#5cb86a"/><rect x="9.2" y="8" width="1.2" height="1.4" fill="#5cb86a"/><path d="M19.2,4.6 H17 Q16.3,4.6 16.3,5.4 V9.6 Q16.3,10.4 17,10.4 H19.2" stroke="#8a8e9c" stroke-width="1.3" fill="none"/></svg>
<svg style="position:absolute;left:1708px;top:252px;" width="21" height="15" viewBox="0 0 21 15"><path d="M0.9,10.8 V5.3 Q0.9,4.2 2,4.2 H3 Q4.1,4.2 4.1,5.3 V10.8 M0.9,7.7 H4.1" stroke="#8a8e9c" stroke-width="1.3" fill="none"/><rect x="5.6" y="0.6" width="8.4" height="13.1" rx="1.3" fill="#3aa648"/><rect x="7.9" y="4" width="3.8" height="6.7" rx="0.8" fill="#c4ecca"/><rect x="9.2" y="5.2" width="1.2" height="1.4" fill="#5cb86a"/><rect x="9.2" y="8" width="1.2" height="1.4" fill="#5cb86a"/><path d="M19.2,4.6 H17 Q16.3,4.6 16.3,5.4 V9.6 Q16.3,10.4 17,10.4 H19.2" stroke="#8a8e9c" stroke-width="1.3" fill="none"/></svg>
<svg style="position:absolute;left:1806.5px;top:255px;" width="12" height="8" viewBox="0 0 12 8"><rect x="0" y="1.5" width="11" height="1.4" fill="#8a8d98"/><rect x="0" y="4.5" width="11" height="1.4" fill="#8a8d98"/></svg>
<svg style="position:absolute;left:1900.5px;top:255px;" width="12" height="8" viewBox="0 0 12 8"><rect x="0" y="1.5" width="11" height="1.4" fill="#8a8d98"/><rect x="0" y="4.5" width="11" height="1.4" fill="#8a8d98"/></svg>
<svg style="position:absolute;left:205px;top:252px;" width="12" height="13" viewBox="0 0 12 13"><ellipse cx="5.6" cy="4.9" rx="3.4" ry="2.3" fill="#22233a"/><ellipse cx="5.6" cy="4.2" rx="1.5" ry="0.9" fill="#8a8c9c"/><path d="M4,6.5 L7.2,6.5 L6,11.8 L5.2,11.8 Z" fill="#22233a"/></svg>
<div style="left:220px;top:276.2px;width:1700px;height:26.23px;background:#eeeff2;"></div>
<div style="left:201px;top:276.2px;width:19px;height:26.23px;background:#f3f4f7;"></div>
<div style="left:221px;top:276.2px;width:123px;height:26.23px;background:#ffffff;"></div>
<div style="left:201px;top:301.43px;width:1719px;height:1px;background:#d9dadf;"></div>
<div class="t" style="left:225.40px;top:282.11px;font-size:13.80px;line-height:15.41px;color:#262838;transform:scaleX(0.9642);">CO0000041</div>
<div class="t" style="left:349.40px;top:282.11px;font-size:13.80px;line-height:15.41px;color:#262838;transform:scaleX(0.9706);">PAN001</div>
<div class="t" style="left:443.40px;top:282.11px;font-size:13.80px;line-height:15.41px;color:#262838;transform:scaleX(0.9350);">Panda Copiers</div>
<div class="t" style="left:862.40px;top:282.11px;font-size:13.80px;line-height:15.41px;color:#262838;transform:scaleX(0.9300);">CPC</div>
<div class="t" style="left:955.90px;top:282.11px;font-size:13.80px;line-height:15.41px;color:#262838;transform:scaleX(0.9580);">Cost Per Co...</div>
<div class="t" style="left:1049.40px;top:282.11px;font-size:13.80px;line-height:15.41px;color:#262838;transform:scaleX(0.9300);">Main</div>
<div class="t" style="left:1237.40px;top:282.11px;font-size:13.80px;line-height:15.41px;color:#262838;transform:scaleX(1.0195);">05/07/2016</div>
<div class="t" style="left:1331.40px;top:282.11px;font-size:13.80px;line-height:15.41px;color:#262838;transform:scaleX(1.0195);">05/07/2021</div>
<div class="t" style="left:1424.90px;top:282.11px;font-size:13.80px;line-height:15.41px;color:#262838;transform:scaleX(0.9416);">Sales Depar...</div>
<div class="t" style="left:1587.00px;top:282.11px;font-size:13.80px;line-height:15.41px;color:#262838;transform:scaleX(0.9774);">60</div>
<div class="t" style="left:1612.40px;top:282.11px;font-size:13.80px;line-height:15.41px;color:#262838;transform:scaleX(0.9300);">Months</div>
<div class="t" style="left:1706.40px;top:282.11px;font-size:13.80px;line-height:15.41px;color:#262838;transform:scaleX(0.9300);">Months</div>
<div class="t" style="left:1876.00px;top:282.11px;font-size:13.80px;line-height:15.41px;color:#262838;transform:scaleX(0.9774);">5</div>
<div style="left:220px;top:302.43px;width:1700px;height:26.23px;background:#e9e9ea;"></div>
<div style="left:201px;top:302.43px;width:19px;height:26.23px;background:#f3f4f7;"></div>
<div style="left:201px;top:327.66px;width:1719px;height:1px;background:#d9dadf;"></div>
<div class="t" style="left:225.40px;top:308.34px;font-size:13.80px;line-height:15.41px;color:#262838;transform:scaleX(0.9642);">CO0000043</div>
<div class="t" style="left:349.40px;top:308.34px;font-size:13.80px;line-height:15.41px;color:#262838;transform:scaleX(0.9506);">HOP001</div>
<div class="t" style="left:443.40px;top:308.34px;font-size:13.80px;line-height:15.41px;color:#262838;transform:scaleX(0.9801);">Hope Works (Pty) Ltd</div>
<div class="t" style="left:862.40px;top:308.34px;font-size:13.80px;line-height:15.41px;color:#262838;transform:scaleX(0.9300);">CPC</div>
<div class="t" style="left:955.90px;top:308.34px;font-size:13.80px;line-height:15.41px;color:#262838;transform:scaleX(0.9580);">Cost Per Co...</div>
<div class="t" style="left:1049.40px;top:308.34px;font-size:13.80px;line-height:15.41px;color:#262838;transform:scaleX(0.9300);">Main</div>
<div class="t" style="left:1237.40px;top:308.34px;font-size:13.80px;line-height:15.41px;color:#262838;transform:scaleX(1.0195);">01/08/2016</div>
<div class="t" style="left:1331.40px;top:308.34px;font-size:13.80px;line-height:15.41px;color:#262838;transform:scaleX(1.0195);">07/09/2021</div>
<div class="t" style="left:1424.90px;top:308.34px;font-size:13.80px;line-height:15.41px;color:#262838;transform:scaleX(0.9416);">Sales Depar...</div>
<div class="t" style="left:1587.00px;top:308.34px;font-size:13.80px;line-height:15.41px;color:#262838;transform:scaleX(0.9774);">60</div>
<div class="t" style="left:1612.40px;top:308.34px;font-size:13.80px;line-height:15.41px;color:#262838;transform:scaleX(0.9300);">Months</div>
<div class="t" style="left:1706.40px;top:308.34px;font-size:13.80px;line-height:15.41px;color:#262838;transform:scaleX(0.9300);">Quarterly</div>
<div class="t" style="left:1876.00px;top:308.34px;font-size:13.80px;line-height:15.41px;color:#262838;transform:scaleX(0.9774);">5</div>
<div style="left:220px;top:328.66px;width:1700px;height:26.23px;background:#e9e9ea;"></div>
<div style="left:201px;top:328.66px;width:19px;height:26.23px;background:#f3f4f7;"></div>
<div style="left:201px;top:353.89px;width:1719px;height:1px;background:#d9dadf;"></div>
<div class="t" style="left:225.40px;top:334.57px;font-size:13.80px;line-height:15.41px;color:#262838;transform:scaleX(0.9642);">CO0000072</div>
<div class="t" style="left:349.40px;top:334.57px;font-size:13.80px;line-height:15.41px;color:#262838;transform:scaleX(0.9506);">HOP001</div>
<div class="t" style="left:443.40px;top:334.57px;font-size:13.80px;line-height:15.41px;color:#262838;transform:scaleX(0.9801);">Hope Works (Pty) Ltd</div>
<div class="t" style="left:862.40px;top:334.57px;font-size:13.80px;line-height:15.41px;color:#262838;transform:scaleX(0.9300);">CPC</div>
<div class="t" style="left:955.90px;top:334.57px;font-size:13.80px;line-height:15.41px;color:#262838;transform:scaleX(0.9580);">Cost Per Co...</div>
<div class="t" style="left:1049.40px;top:334.57px;font-size:13.80px;line-height:15.41px;color:#262838;transform:scaleX(0.9754);">Durban Area</div>
<div class="t" style="left:1143.40px;top:334.57px;font-size:13.80px;line-height:15.41px;color:#262838;transform:scaleX(0.9774);">1234</div>
<div class="t" style="left:1237.40px;top:334.57px;font-size:13.80px;line-height:15.41px;color:#262838;transform:scaleX(1.0195);">07/03/2018</div>
<div class="t" style="left:1331.40px;top:334.57px;font-size:13.80px;line-height:15.41px;color:#262838;transform:scaleX(1.0195);">07/03/2023</div>
<div class="t" style="left:1424.90px;top:334.57px;font-size:13.80px;line-height:15.41px;color:#262838;transform:scaleX(0.9416);">Sales Depar...</div>
<div class="t" style="left:1587.00px;top:334.57px;font-size:13.80px;line-height:15.41px;color:#262838;transform:scaleX(0.9774);">60</div>
<div class="t" style="left:1612.40px;top:334.57px;font-size:13.80px;line-height:15.41px;color:#262838;transform:scaleX(0.9300);">Months</div>
<div class="t" style="left:1706.40px;top:334.57px;font-size:13.80px;line-height:15.41px;color:#262838;transform:scaleX(0.9300);">Months</div>
<div class="t" style="left:1876.00px;top:334.57px;font-size:13.80px;line-height:15.41px;color:#262838;transform:scaleX(0.9774);">2</div>
<div style="left:220px;top:354.89px;width:1700px;height:26.23px;background:#e9e9ea;"></div>
<div style="left:201px;top:354.89px;width:19px;height:26.23px;background:#f3f4f7;"></div>
<div style="left:201px;top:380.12px;width:1719px;height:1px;background:#d9dadf;"></div>
<div class="t" style="left:225.40px;top:360.80px;font-size:13.80px;line-height:15.41px;color:#262838;transform:scaleX(0.9642);">CO0000074</div>
<div class="t" style="left:349.40px;top:360.80px;font-size:13.80px;line-height:15.41px;color:#262838;transform:scaleX(0.9509);">DER001</div>
<div class="t" style="left:443.40px;top:360.80px;font-size:13.80px;line-height:15.41px;color:#262838;transform:scaleX(0.9598);">Derton / Technologies</div>
<div class="t" style="left:862.40px;top:360.80px;font-size:13.80px;line-height:15.41px;color:#262838;transform:scaleX(0.9300);">CPC</div>
<div class="t" style="left:955.90px;top:360.80px;font-size:13.80px;line-height:15.41px;color:#262838;transform:scaleX(0.9580);">Cost Per Co...</div>
<div class="t" style="left:1049.40px;top:360.80px;font-size:13.80px;line-height:15.41px;color:#262838;transform:scaleX(0.9754);">Durban Area</div>
<div class="t" style="left:1143.40px;top:360.80px;font-size:13.80px;line-height:15.41px;color:#262838;transform:scaleX(0.9774);">1234</div>
<div class="t" style="left:1237.40px;top:360.80px;font-size:13.80px;line-height:15.41px;color:#262838;transform:scaleX(1.0195);">15/06/2018</div>
<div class="t" style="left:1331.40px;top:360.80px;font-size:13.80px;line-height:15.41px;color:#262838;transform:scaleX(1.0195);">15/06/2023</div>
<div class="t" style="left:1424.90px;top:360.80px;font-size:13.80px;line-height:15.41px;color:#262838;transform:scaleX(0.9416);">Sales Depar...</div>
<div class="t" style="left:1587.00px;top:360.80px;font-size:13.80px;line-height:15.41px;color:#262838;transform:scaleX(0.9774);">60</div>
<div class="t" style="left:1612.40px;top:360.80px;font-size:13.80px;line-height:15.41px;color:#262838;transform:scaleX(0.9300);">Months</div>
<div class="t" style="left:1706.40px;top:360.80px;font-size:13.80px;line-height:15.41px;color:#262838;transform:scaleX(0.9300);">Months</div>
<div class="t" style="left:1876.00px;top:360.80px;font-size:13.80px;line-height:15.41px;color:#262838;transform:scaleX(0.9774);">6</div>
<div style="left:220px;top:381.12px;width:1700px;height:26.23px;background:#e9e9ea;"></div>
<div style="left:201px;top:381.12px;width:19px;height:26.23px;background:#f3f4f7;"></div>
<div style="left:201px;top:406.35px;width:1719px;height:1px;background:#d9dadf;"></div>
<div class="t" style="left:225.40px;top:387.03px;font-size:13.80px;line-height:15.41px;color:#262838;transform:scaleX(0.9642);">CO0000077</div>
<div class="t" style="left:349.40px;top:387.03px;font-size:13.80px;line-height:15.41px;color:#262838;transform:scaleX(0.9571);">PIN0001</div>
<div class="t" style="left:443.40px;top:387.03px;font-size:13.80px;line-height:15.41px;color:#262838;transform:scaleX(0.9366);">Pink Shoes</div>
<div class="t" style="left:862.40px;top:387.03px;font-size:13.80px;line-height:15.41px;color:#262838;transform:scaleX(0.9300);">CPC</div>
<div class="t" style="left:955.90px;top:387.03px;font-size:13.80px;line-height:15.41px;color:#262838;transform:scaleX(0.9580);">Cost Per Co...</div>
<div class="t" style="left:1049.40px;top:387.03px;font-size:13.80px;line-height:15.41px;color:#262838;transform:scaleX(0.9754);">Durban Area</div>
<div class="t" style="left:1237.40px;top:387.03px;font-size:13.80px;line-height:15.41px;color:#262838;transform:scaleX(1.0195);">18/06/2018</div>
<div class="t" style="left:1331.40px;top:387.03px;font-size:13.80px;line-height:15.41px;color:#262838;transform:scaleX(1.0195);">18/06/2023</div>
<div class="t" style="left:1424.90px;top:387.03px;font-size:13.80px;line-height:15.41px;color:#262838;transform:scaleX(0.9416);">Sales Depar...</div>
<div class="t" style="left:1587.00px;top:387.03px;font-size:13.80px;line-height:15.41px;color:#262838;transform:scaleX(0.9774);">60</div>
<div class="t" style="left:1612.40px;top:387.03px;font-size:13.80px;line-height:15.41px;color:#262838;transform:scaleX(0.9300);">Months</div>
<div class="t" style="left:1706.40px;top:387.03px;font-size:13.80px;line-height:15.41px;color:#262838;transform:scaleX(0.9300);">Months</div>
<div class="t" style="left:1876.00px;top:387.03px;font-size:13.80px;line-height:15.41px;color:#262838;transform:scaleX(0.9774);">4</div>
<div style="left:220px;top:407.35px;width:1700px;height:26.23px;background:#e9e9ea;"></div>
<div style="left:201px;top:407.35px;width:19px;height:26.23px;background:#f3f4f7;"></div>
<div style="left:201px;top:432.58px;width:1719px;height:1px;background:#d9dadf;"></div>
<div class="t" style="left:225.40px;top:413.26px;font-size:13.80px;line-height:15.41px;color:#262838;transform:scaleX(0.9642);">CO0000078</div>
<div class="t" style="left:349.40px;top:413.26px;font-size:13.80px;line-height:15.41px;color:#262838;transform:scaleX(0.9571);">PIN0001</div>
<div class="t" style="left:443.40px;top:413.26px;font-size:13.80px;line-height:15.41px;color:#262838;transform:scaleX(0.9366);">Pink Shoes</div>
<div class="t" style="left:862.40px;top:413.26px;font-size:13.80px;line-height:15.41px;color:#262838;transform:scaleX(0.9300);">CPC</div>
<div class="t" style="left:955.90px;top:413.26px;font-size:13.80px;line-height:15.41px;color:#262838;transform:scaleX(0.9580);">Cost Per Co...</div>
<div class="t" style="left:1049.40px;top:413.26px;font-size:13.80px;line-height:15.41px;color:#262838;transform:scaleX(0.9754);">Durban Area</div>
<div class="t" style="left:1237.40px;top:413.26px;font-size:13.80px;line-height:15.41px;color:#262838;transform:scaleX(1.0195);">18/06/2018</div>
<div class="t" style="left:1331.40px;top:413.26px;font-size:13.80px;line-height:15.41px;color:#262838;transform:scaleX(1.0195);">18/06/2023</div>
<div class="t" style="left:1424.90px;top:413.26px;font-size:13.80px;line-height:15.41px;color:#262838;transform:scaleX(0.9416);">Sales Depar...</div>
<div class="t" style="left:1587.00px;top:413.26px;font-size:13.80px;line-height:15.41px;color:#262838;transform:scaleX(0.9774);">60</div>
<div class="t" style="left:1612.40px;top:413.26px;font-size:13.80px;line-height:15.41px;color:#262838;transform:scaleX(0.9300);">Months</div>
<div class="t" style="left:1706.40px;top:413.26px;font-size:13.80px;line-height:15.41px;color:#262838;transform:scaleX(0.9300);">Months</div>
<div class="t" style="left:1876.00px;top:413.26px;font-size:13.80px;line-height:15.41px;color:#262838;transform:scaleX(0.9774);">4</div>
<div style="left:220px;top:433.58px;width:1700px;height:26.23px;background:#e9e9ea;"></div>
<div style="left:201px;top:433.58px;width:19px;height:26.23px;background:#f3f4f7;"></div>
<div style="left:201px;top:458.81px;width:1719px;height:1px;background:#d9dadf;"></div>
<div class="t" style="left:225.40px;top:439.49px;font-size:13.80px;line-height:15.41px;color:#262838;transform:scaleX(0.9642);">CO0000080</div>
<div class="t" style="left:349.40px;top:439.49px;font-size:13.80px;line-height:15.41px;color:#262838;transform:scaleX(0.9516);">OFF001</div>
<div class="t" style="left:443.40px;top:439.49px;font-size:13.80px;line-height:15.41px;color:#262838;transform:scaleX(0.9488);">Office Supplies Unlimited</div>
<div class="t" style="left:862.40px;top:439.49px;font-size:13.80px;line-height:15.41px;color:#262838;transform:scaleX(0.9300);">CPC</div>
<div class="t" style="left:955.90px;top:439.49px;font-size:13.80px;line-height:15.41px;color:#262838;transform:scaleX(0.9580);">Cost Per Co...</div>
<div class="t" style="left:1049.40px;top:439.49px;font-size:13.80px;line-height:15.41px;color:#262838;transform:scaleX(0.9514);">Durban Cen...</div>
<div class="t" style="left:1143.40px;top:439.49px;font-size:13.80px;line-height:15.41px;color:#262838;transform:scaleX(0.9774);">1234</div>
<div class="t" style="left:1237.40px;top:439.49px;font-size:13.80px;line-height:15.41px;color:#262838;transform:scaleX(1.0195);">06/05/2017</div>
<div class="t" style="left:1331.40px;top:439.49px;font-size:13.80px;line-height:15.41px;color:#262838;transform:scaleX(1.0195);">06/05/2020</div>
<div class="t" style="left:1587.00px;top:439.49px;font-size:13.80px;line-height:15.41px;color:#262838;transform:scaleX(0.9774);">60</div>
<div class="t" style="left:1612.40px;top:439.49px;font-size:13.80px;line-height:15.41px;color:#262838;transform:scaleX(0.9300);">Months</div>
<div class="t" style="left:1706.40px;top:439.49px;font-size:13.80px;line-height:15.41px;color:#262838;transform:scaleX(0.9300);">Months</div>
<div class="t" style="left:1876.00px;top:439.49px;font-size:13.80px;line-height:15.41px;color:#262838;transform:scaleX(0.9774);">2</div>
<div style="left:220px;top:459.81px;width:1700px;height:26.23px;background:#e9e9ea;"></div>
<div style="left:201px;top:459.81px;width:19px;height:26.23px;background:#f3f4f7;"></div>
<div style="left:201px;top:485.04px;width:1719px;height:1px;background:#d9dadf;"></div>
<div class="t" style="left:225.40px;top:465.72px;font-size:13.80px;line-height:15.41px;color:#262838;transform:scaleX(0.9642);">CO0000079</div>
<div class="t" style="left:349.40px;top:465.72px;font-size:13.80px;line-height:15.41px;color:#262838;transform:scaleX(0.9506);">HOP001</div>
<div class="t" style="left:443.40px;top:465.72px;font-size:13.80px;line-height:15.41px;color:#262838;transform:scaleX(0.9801);">Hope Works (Pty) Ltd</div>
<div class="t" style="left:862.40px;top:465.72px;font-size:13.80px;line-height:15.41px;color:#262838;transform:scaleX(0.9300);">CPC</div>
<div class="t" style="left:955.90px;top:465.72px;font-size:13.80px;line-height:15.41px;color:#262838;transform:scaleX(0.9580);">Cost Per Co...</div>
<div class="t" style="left:1049.40px;top:465.72px;font-size:13.80px;line-height:15.41px;color:#262838;transform:scaleX(0.9754);">Durban Area</div>
<div class="t" style="left:1237.40px;top:465.72px;font-size:13.80px;line-height:15.41px;color:#262838;transform:scaleX(1.0195);">18/06/2018</div>
<div class="t" style="left:1331.40px;top:465.72px;font-size:13.80px;line-height:15.41px;color:#262838;transform:scaleX(1.0195);">18/06/2023</div>
<div class="t" style="left:1424.90px;top:465.72px;font-size:13.80px;line-height:15.41px;color:#262838;transform:scaleX(0.9416);">Sales Depar...</div>
<div class="t" style="left:1587.00px;top:465.72px;font-size:13.80px;line-height:15.41px;color:#262838;transform:scaleX(0.9774);">60</div>
<div class="t" style="left:1612.40px;top:465.72px;font-size:13.80px;line-height:15.41px;color:#262838;transform:scaleX(0.9300);">Months</div>
<div class="t" style="left:1706.40px;top:465.72px;font-size:13.80px;line-height:15.41px;color:#262838;transform:scaleX(0.9300);">Months</div>
<div class="t" style="left:1876.00px;top:465.72px;font-size:13.80px;line-height:15.41px;color:#262838;transform:scaleX(0.9774);">4</div>
<div style="left:220px;top:486.04px;width:1700px;height:26.23px;background:#e9e9ea;"></div>
<div style="left:201px;top:486.04px;width:19px;height:26.23px;background:#f3f4f7;"></div>
<div style="left:201px;top:511.27px;width:1719px;height:1px;background:#d9dadf;"></div>
<div class="t" style="left:225.40px;top:491.95px;font-size:13.80px;line-height:15.41px;color:#262838;transform:scaleX(0.9642);">CO0000031</div>
<div class="t" style="left:349.40px;top:491.95px;font-size:13.80px;line-height:15.41px;color:#262838;transform:scaleX(0.9516);">YES001</div>
<div class="t" style="left:443.40px;top:491.95px;font-size:13.80px;line-height:15.41px;color:#262838;transform:scaleX(0.9487);">Young Electric</div>
<div class="t" style="left:862.40px;top:491.95px;font-size:13.80px;line-height:15.41px;color:#262838;transform:scaleX(0.9300);">CPC</div>
<div class="t" style="left:955.90px;top:491.95px;font-size:13.80px;line-height:15.41px;color:#262838;transform:scaleX(0.9580);">Cost Per Co...</div>
<div class="t" style="left:1049.40px;top:491.95px;font-size:13.80px;line-height:15.41px;color:#262838;transform:scaleX(0.9300);">Hillcrest</div>
<div class="t" style="left:1237.40px;top:491.95px;font-size:13.80px;line-height:15.41px;color:#262838;transform:scaleX(1.0195);">24/03/2016</div>
<div class="t" style="left:1331.40px;top:491.95px;font-size:13.80px;line-height:15.41px;color:#262838;transform:scaleX(1.0195);">24/03/2021</div>
<div class="t" style="left:1424.90px;top:491.95px;font-size:13.80px;line-height:15.41px;color:#262838;transform:scaleX(0.9416);">Sales Depar...</div>
<div class="t" style="left:1587.00px;top:491.95px;font-size:13.80px;line-height:15.41px;color:#262838;transform:scaleX(0.9774);">60</div>
<div class="t" style="left:1612.40px;top:491.95px;font-size:13.80px;line-height:15.41px;color:#262838;transform:scaleX(0.9300);">Months</div>
<div class="t" style="left:1706.40px;top:491.95px;font-size:13.80px;line-height:15.41px;color:#262838;transform:scaleX(0.9300);">Months</div>
<div class="t" style="left:1876.00px;top:491.95px;font-size:13.80px;line-height:15.41px;color:#262838;transform:scaleX(0.9774);">1</div>
<div style="left:220px;top:512.27px;width:1700px;height:26.23px;background:#e9e9ea;"></div>
<div style="left:201px;top:512.27px;width:19px;height:26.23px;background:#f3f4f7;"></div>
<div style="left:201px;top:537.5px;width:1719px;height:1px;background:#d9dadf;"></div>
<div class="t" style="left:225.40px;top:518.18px;font-size:13.80px;line-height:15.41px;color:#262838;transform:scaleX(0.9642);">CO0000019</div>
<div class="t" style="left:349.40px;top:518.18px;font-size:13.80px;line-height:15.41px;color:#262838;transform:scaleX(0.9516);">OFF001</div>
<div class="t" style="left:443.40px;top:518.18px;font-size:13.80px;line-height:15.41px;color:#262838;transform:scaleX(0.9488);">Office Supplies Unlimited</div>
<div class="t" style="left:862.40px;top:518.18px;font-size:13.80px;line-height:15.41px;color:#262838;transform:scaleX(0.9300);">CPC</div>
<div class="t" style="left:955.90px;top:518.18px;font-size:13.80px;line-height:15.41px;color:#262838;transform:scaleX(0.9580);">Cost Per Co...</div>
<div class="t" style="left:1049.40px;top:518.18px;font-size:13.80px;line-height:15.41px;color:#262838;transform:scaleX(0.9300);">Main</div>
<div class="t" style="left:1237.40px;top:518.18px;font-size:13.80px;line-height:15.41px;color:#262838;transform:scaleX(1.0195);">28/07/2014</div>
<div class="t" style="left:1331.40px;top:518.18px;font-size:13.80px;line-height:15.41px;color:#262838;transform:scaleX(1.0195);">28/07/2019</div>
<div class="t" style="left:1424.90px;top:518.18px;font-size:13.80px;line-height:15.41px;color:#262838;transform:scaleX(0.9416);">Sales Depar...</div>
<div class="t" style="left:1587.00px;top:518.18px;font-size:13.80px;line-height:15.41px;color:#262838;transform:scaleX(0.9774);">60</div>
<div class="t" style="left:1612.40px;top:518.18px;font-size:13.80px;line-height:15.41px;color:#262838;transform:scaleX(0.9300);">Months</div>
<div class="t" style="left:1706.40px;top:518.18px;font-size:13.80px;line-height:15.41px;color:#262838;transform:scaleX(0.9300);">Bi-annual</div>
<div class="t" style="left:1876.00px;top:518.18px;font-size:13.80px;line-height:15.41px;color:#262838;transform:scaleX(0.9774);">6</div>
<div style="left:220px;top:538.5px;width:1700px;height:26.23px;background:#e9e9ea;"></div>
<div style="left:201px;top:538.5px;width:19px;height:26.23px;background:#f3f4f7;"></div>
<div style="left:201px;top:563.73px;width:1719px;height:1px;background:#d9dadf;"></div>
<div class="t" style="left:225.40px;top:544.41px;font-size:13.80px;line-height:15.41px;color:#262838;transform:scaleX(0.9642);">CO0000018</div>
<div class="t" style="left:349.40px;top:544.41px;font-size:13.80px;line-height:15.41px;color:#262838;transform:scaleX(0.9506);">SAM001</div>
<div class="t" style="left:443.40px;top:544.41px;font-size:13.80px;line-height:15.41px;color:#262838;transform:scaleX(0.9343);">Samanthas Diner</div>
<div class="t" style="left:862.40px;top:544.41px;font-size:13.80px;line-height:15.41px;color:#262838;transform:scaleX(0.9300);">CPC</div>
<div class="t" style="left:955.90px;top:544.41px;font-size:13.80px;line-height:15.41px;color:#262838;transform:scaleX(0.9580);">Cost Per Co...</div>
<div class="t" style="left:1049.40px;top:544.41px;font-size:13.80px;line-height:15.41px;color:#262838;transform:scaleX(0.9754);">Durban Area</div>
<div class="t" style="left:1237.40px;top:544.41px;font-size:13.80px;line-height:15.41px;color:#262838;transform:scaleX(1.0195);">09/07/2014</div>
<div class="t" style="left:1331.40px;top:544.41px;font-size:13.80px;line-height:15.41px;color:#262838;transform:scaleX(1.0195);">09/07/2019</div>
<div class="t" style="left:1424.90px;top:544.41px;font-size:13.80px;line-height:15.41px;color:#262838;transform:scaleX(0.9416);">Sales Depar...</div>
<div class="t" style="left:1587.00px;top:544.41px;font-size:13.80px;line-height:15.41px;color:#262838;transform:scaleX(0.9774);">60</div>
<div class="t" style="left:1612.40px;top:544.41px;font-size:13.80px;line-height:15.41px;color:#262838;transform:scaleX(0.9300);">Months</div>
<div class="t" style="left:1706.40px;top:544.41px;font-size:13.80px;line-height:15.41px;color:#262838;transform:scaleX(0.9300);">Months</div>
<div class="t" style="left:1876.00px;top:544.41px;font-size:13.80px;line-height:15.41px;color:#262838;transform:scaleX(0.9774);">5</div>
<div style="left:220px;top:564.73px;width:1700px;height:26.23px;background:#e9e9ea;"></div>
<div style="left:201px;top:564.73px;width:19px;height:26.23px;background:#f3f4f7;"></div>
<div style="left:201px;top:589.96px;width:1719px;height:1px;background:#d9dadf;"></div>
<div class="t" style="left:225.40px;top:570.64px;font-size:13.80px;line-height:15.41px;color:#262838;transform:scaleX(0.9642);">CO0000016</div>
<div class="t" style="left:349.40px;top:570.64px;font-size:13.80px;line-height:15.41px;color:#262838;transform:scaleX(0.9545);">TIA001</div>
<div class="t" style="left:443.40px;top:570.64px;font-size:13.80px;line-height:15.41px;color:#262838;transform:scaleX(0.9429);">Titan Group</div>
<div class="t" style="left:862.40px;top:570.64px;font-size:13.80px;line-height:15.41px;color:#262838;transform:scaleX(0.9300);">CPC</div>
<div class="t" style="left:955.90px;top:570.64px;font-size:13.80px;line-height:15.41px;color:#262838;transform:scaleX(0.9580);">Cost Per Co...</div>
<div class="t" style="left:1049.40px;top:570.64px;font-size:13.80px;line-height:15.41px;color:#262838;transform:scaleX(0.9300);">Main</div>
<div class="t" style="left:1237.40px;top:570.64px;font-size:13.80px;line-height:15.41px;color:#262838;transform:scaleX(1.0195);">13/06/2014</div>
<div class="t" style="left:1331.40px;top:570.64px;font-size:13.80px;line-height:15.41px;color:#262838;transform:scaleX(1.0195);">13/06/2019</div>
<div class="t" style="left:1424.90px;top:570.64px;font-size:13.80px;line-height:15.41px;color:#262838;transform:scaleX(0.9416);">Sales Depar...</div>
<div class="t" style="left:1587.00px;top:570.64px;font-size:13.80px;line-height:15.41px;color:#262838;transform:scaleX(0.9774);">60</div>
<div class="t" style="left:1612.40px;top:570.64px;font-size:13.80px;line-height:15.41px;color:#262838;transform:scaleX(0.9300);">Months</div>
<div class="t" style="left:1706.40px;top:570.64px;font-size:13.80px;line-height:15.41px;color:#262838;transform:scaleX(0.9300);">Months</div>
<div class="t" style="left:1876.00px;top:570.64px;font-size:13.80px;line-height:15.41px;color:#262838;transform:scaleX(0.9774);">4</div>
<div style="left:220px;top:275.5px;width:1px;height:314.76px;background:#d9dadf;"></div>
<div style="left:344px;top:275.5px;width:1px;height:314.76px;background:#d9dadf;"></div>
<div style="left:438px;top:275.5px;width:1px;height:314.76px;background:#d9dadf;"></div>
<div style="left:763px;top:275.5px;width:1px;height:314.76px;background:#d9dadf;"></div>
<div style="left:857px;top:275.5px;width:1px;height:314.76px;background:#d9dadf;"></div>
<div style="left:950.5px;top:275.5px;width:1px;height:314.76px;background:#d9dadf;"></div>
<div style="left:1044px;top:275.5px;width:1px;height:314.76px;background:#d9dadf;"></div>
<div style="left:1138px;top:275.5px;width:1px;height:314.76px;background:#d9dadf;"></div>
<div style="left:1232px;top:275.5px;width:1px;height:314.76px;background:#d9dadf;"></div>
<div style="left:1326px;top:275.5px;width:1px;height:314.76px;background:#d9dadf;"></div>
<div style="left:1419.5px;top:275.5px;width:1px;height:314.76px;background:#d9dadf;"></div>
<div style="left:1513px;top:275.5px;width:1px;height:314.76px;background:#d9dadf;"></div>
<div style="left:1607px;top:275.5px;width:1px;height:314.76px;background:#d9dadf;"></div>
<div style="left:1701px;top:275.5px;width:1px;height:314.76px;background:#d9dadf;"></div>
<div style="left:1794.5px;top:275.5px;width:1px;height:314.76px;background:#d9dadf;"></div>
<div style="left:1888.5px;top:275.5px;width:1px;height:314.76px;background:#d9dadf;"></div>
<svg style="position:absolute;left:207px;top:283px;" width="8" height="12" viewBox="0 0 8 12"><polygon points="1,1 7,6 1,11" fill="#1e1f2e"/></svg>
<div style="left:201px;top:973.5px;width:1719px;height:21.5px;background:#f3f3f5;"></div>
<svg style="position:absolute;left:207px;top:979px;" width="8" height="11" viewBox="0 0 8 11"><polygon points="7,1 2,5.5 7,10" fill="#7e818c"/></svg>
<svg style="position:absolute;left:1904px;top:979px;" width="8" height="11" viewBox="0 0 8 11"><polygon points="1,1 6,5.5 1,10" fill="#7e818c"/></svg>
<div style="left:222px;top:979.5px;width:953px;height:9.5px;box-sizing:border-box;border:1px solid #a8abb3;border-radius:5px;background:linear-gradient(#eeeff2,#d9dade);"></div>
<div style="left:200px;top:995px;width:1720px;height:1px;background:#a6a9b1;"></div>
<div style="left:1918px;top:179px;width:2px;height:817px;background:linear-gradient(90deg,#b4b7bf,#a3a6ae);"></div>
<div style="left:1919px;top:996px;width:1px;height:34px;background:#c4c6cc;"></div>
<div style="left:0px;top:996px;width:1920px;height:34px;background:linear-gradient(#cfd0d5 0,#cfd0d5 1.5px,#dcdde1 2.5px,#d5d6db 45%,#cbccd4 65%,#c9cad2 100%);"></div>
<div style="left:0px;top:1029px;width:320px;height:1px;background:#b8bac0;"></div>
<div class="t" style="left:9.70px;top:1006.51px;font-size:13.80px;line-height:15.41px;color:#2c2e44;transform:scaleX(0.9545);">Open Windows</div>
<svg style="position:absolute;left:104px;top:1010px;" width="9" height="6" viewBox="0 0 9 6"><polygon points="0.5,0.5 8.5,0.5 4.5,5" fill="#2c2e44"/></svg>
<div style="left:1471.8px;top:1001px;width:1px;height:28px;background:#c3c5cb;"></div>
<div style="left:1574.8px;top:1001px;width:1px;height:28px;background:#c3c5cb;"></div>
<div style="left:1665.6px;top:1001px;width:1px;height:28px;background:#c3c5cb;"></div>
<div style="left:1788.9px;top:1001px;width:1px;height:28px;background:#c3c5cb;"></div>
<div class="t" style="left:1484.00px;top:1007.11px;font-size:13.80px;line-height:15.41px;color:#2c2e44;transform:scaleX(0.9539);">User : Bianca</div>
<div class="t" style="left:1585.00px;top:1007.11px;font-size:13.80px;line-height:15.41px;color:#2c2e44;transform:scaleX(1.0137);">27/01/2023</div>
<div class="t" style="left:1675.90px;top:1007.11px;font-size:13.80px;line-height:15.41px;color:#2c2e44;transform:scaleX(1.0220);">Version : 2.5.1.4</div>
<div class="t" style="left:1798.40px;top:1007.11px;font-size:13.80px;line-height:15.41px;color:#2c2e44;transform:scaleX(0.9403);">Example Company</div>
<div style="left:0px;top:0px;width:1px;height:1030px;background:#c6c8ce;"></div>
</body></html>
